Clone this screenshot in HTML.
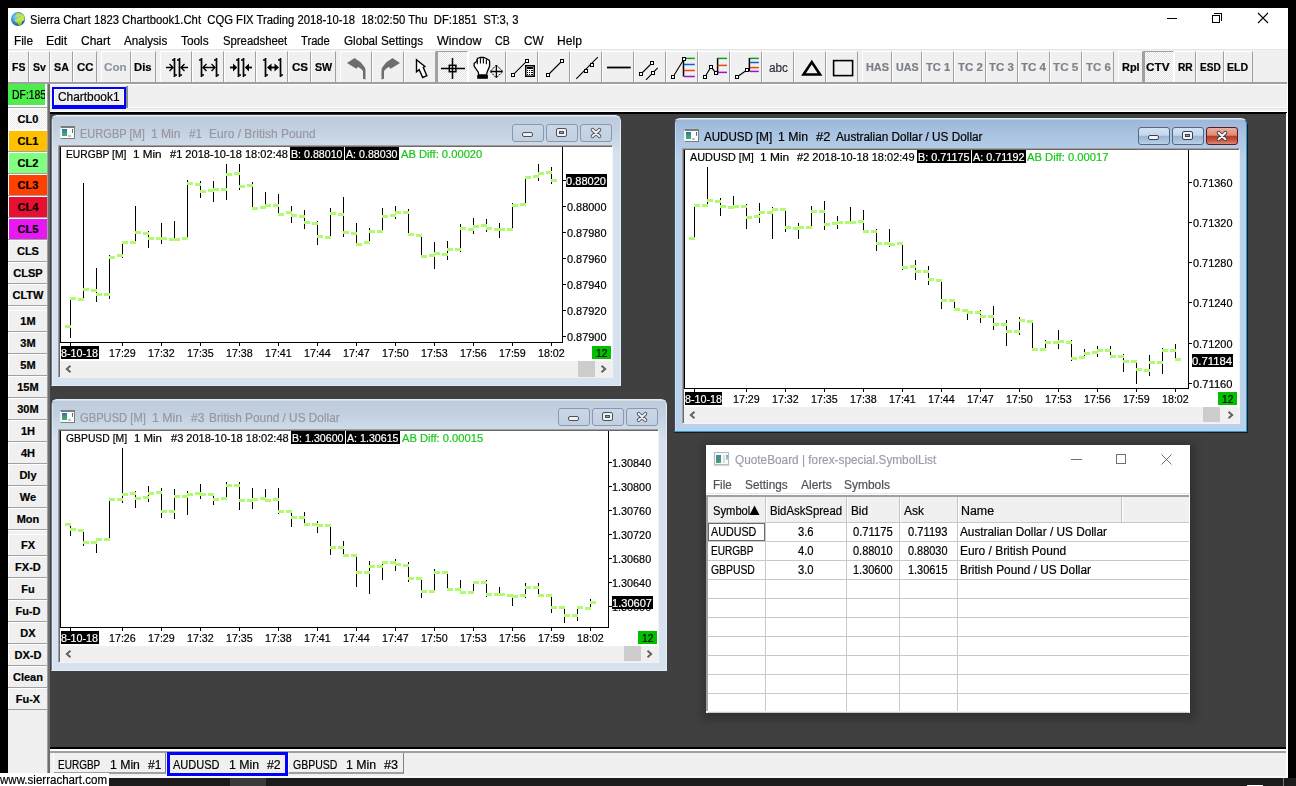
<!DOCTYPE html><html><head><meta charset="utf-8"><style>
*{margin:0;padding:0;box-sizing:border-box}
html,body{width:1296px;height:786px;overflow:hidden;background:#000;font-family:"Liberation Sans",sans-serif;}
div{position:absolute}
.t{position:absolute;white-space:pre;line-height:1;color:#000;-webkit-text-stroke:0.2px currentColor}
svg{position:absolute;overflow:visible}
</style></head><body><div style="left:8px;top:8px;width:1280px;height:770px;background:#fff"></div><svg style="left:10.8px;top:11.6px" width="14" height="14" viewBox="0 0 14 14"><defs><radialGradient id="gb" cx="0.35" cy="0.35" r="0.7"><stop offset="0" stop-color="#8ad4f4"/><stop offset="0.6" stop-color="#2f86d0"/><stop offset="1" stop-color="#1a56a8"/></radialGradient><linearGradient id="gg" x1="0" y1="0" x2="0" y2="1"><stop offset="0" stop-color="#b8e050"/><stop offset="0.5" stop-color="#c4ec48"/><stop offset="1" stop-color="#8cc020"/></linearGradient></defs><circle cx="7" cy="7" r="7" fill="url(#gb)"/><path d="M5.5 1.2 Q9.5 0.3 12.6 3.2 Q14.2 6 13.2 8.2 L11.4 9.2 Q10.8 12.2 8.6 13.8 Q7.2 13.4 6.8 11.2 Q4.2 10.4 3.4 8.6 Q3.8 6.8 6.2 6.9 Q7.4 6 6.2 5 Q4.6 4 5.5 1.2Z" fill="url(#gg)"/><path d="M7.5 4.2 Q9 4 10 5 Q9 5.6 7.8 5.2Z" fill="#5ab0e0" opacity="0.8"/></svg><div class="t" style="left:31.00px;top:13.84px;font-size:12px;color:#000;transform:scaleX(0.9391);transform-origin:0 0;margin-left:-0.56px;">Sierra Chart 1823 Chartbook1.Cht  CQG FIX Trading 2018-10-18  18:02:50 Thu  DF:1851  ST:3, 3</div><div style="left:1167px;top:18px;width:10px;height:1px;background:#000"></div><div style="left:1214px;top:13px;width:8px;height:8px;border:1px solid #000;border-left:none;border-bottom:none"></div><div style="left:1212px;top:15px;width:8px;height:8px;border:1px solid #000;background:#fff"></div><svg style="left:1258px;top:13px" width="10" height="10"><path d="M0 0L10 10M10 0L0 10" stroke="#000" stroke-width="1.1"/></svg><div class="t" style="left:15.00px;top:34.84px;font-size:12px;color:#000;transform:scaleX(0.9859);transform-origin:0 0;margin-left:-0.59px;">File</div><div class="t" style="left:46.90px;top:34.84px;font-size:12px;color:#000;transform:scaleX(1.0256);transform-origin:0 0;margin-left:-0.62px;">Edit</div><div class="t" style="left:81.60px;top:34.84px;font-size:12px;color:#000;transform:scaleX(1.0012);transform-origin:0 0;margin-left:-0.60px;">Chart</div><div class="t" style="left:124.40px;top:34.84px;font-size:12px;color:#000;transform:scaleX(0.9678);transform-origin:0 0;margin-left:-0.58px;">Analysis</div><div class="t" style="left:181.60px;top:34.84px;font-size:12px;color:#000;transform:scaleX(0.9876);transform-origin:0 0;margin-left:-0.59px;">Tools</div><div class="t" style="left:223.30px;top:34.84px;font-size:12px;color:#000;transform:scaleX(0.9437);transform-origin:0 0;margin-left:-0.57px;">Spreadsheet</div><div class="t" style="left:302.00px;top:34.84px;font-size:12px;color:#000;transform:scaleX(0.9321);transform-origin:0 0;margin-left:-0.56px;">Trade</div><div class="t" style="left:344.40px;top:34.84px;font-size:12px;color:#000;transform:scaleX(0.9713);transform-origin:0 0;margin-left:-0.58px;">Global Settings</div><div class="t" style="left:437.70px;top:34.84px;font-size:12px;color:#000;transform:scaleX(1.0408);transform-origin:0 0;margin-left:-0.62px;">Window</div><div class="t" style="left:495.60px;top:34.84px;font-size:12px;color:#000;transform:scaleX(0.8851);transform-origin:0 0;margin-left:-0.53px;">CB</div><div class="t" style="left:524.30px;top:34.84px;font-size:12px;color:#000;transform:scaleX(0.9782);transform-origin:0 0;margin-left:-0.59px;">CW</div><div class="t" style="left:557.40px;top:34.84px;font-size:12px;color:#000;transform:scaleX(1.0084);transform-origin:0 0;margin-left:-0.61px;">Help</div><div style="left:8px;top:49px;width:1280px;height:35px;background:#f0f0f0"></div><div style="left:8px;top:49px;width:1279px;height:1px;background:#e6e6e6"></div><div style="left:8px;top:82px;width:1279px;height:2px;background:#a0a0a0"></div><div style="left:8px;top:51px;width:21px;height:31px;background:#f0f0f0;border-left:1px solid #fff;border-top:1px solid #fff;border-right:1px solid #a0a0a0;"></div><div style="left:29px;top:51px;width:21px;height:31px;background:#f0f0f0;border-left:1px solid #fff;border-top:1px solid #fff;border-right:1px solid #a0a0a0;"></div><div style="left:50px;top:51px;width:23px;height:31px;background:#f0f0f0;border-left:1px solid #fff;border-top:1px solid #fff;border-right:1px solid #a0a0a0;"></div><div style="left:73px;top:51px;width:24px;height:31px;background:#f0f0f0;border-left:1px solid #fff;border-top:1px solid #fff;border-right:1px solid #a0a0a0;"></div><div style="left:101px;top:51px;width:30px;height:31px;background:#f0f0f0;border-left:1px solid #fff;border-top:1px solid #fff;border-right:1px solid #a0a0a0;"></div><div style="left:131px;top:51px;width:25px;height:31px;background:#f0f0f0;border-left:1px solid #fff;border-top:1px solid #fff;border-right:1px solid #a0a0a0;"></div><div style="left:160px;top:51px;width:32px;height:31px;background:#f0f0f0;border-left:1px solid #fff;border-top:1px solid #fff;border-right:1px solid #a0a0a0;"></div><div style="left:192px;top:51px;width:32px;height:31px;background:#f0f0f0;border-left:1px solid #fff;border-top:1px solid #fff;border-right:1px solid #a0a0a0;"></div><div style="left:224px;top:51px;width:32px;height:31px;background:#f0f0f0;border-left:1px solid #fff;border-top:1px solid #fff;border-right:1px solid #a0a0a0;"></div><div style="left:256px;top:51px;width:32px;height:31px;background:#f0f0f0;border-left:1px solid #fff;border-top:1px solid #fff;border-right:1px solid #a0a0a0;"></div><div style="left:288px;top:51px;width:23px;height:31px;background:#f0f0f0;border-left:1px solid #fff;border-top:1px solid #fff;border-right:1px solid #a0a0a0;"></div><div style="left:311px;top:51px;width:25px;height:31px;background:#f0f0f0;border-left:1px solid #fff;border-top:1px solid #fff;border-right:1px solid #a0a0a0;"></div><div style="left:340px;top:51px;width:32px;height:31px;background:#f0f0f0;border-left:1px solid #fff;border-top:1px solid #fff;border-right:1px solid #a0a0a0;"></div><div style="left:372px;top:51px;width:32px;height:31px;background:#f0f0f0;border-left:1px solid #fff;border-top:1px solid #fff;border-right:1px solid #a0a0a0;"></div><div style="left:404px;top:51px;width:32px;height:31px;background:#f0f0f0;border-left:1px solid #fff;border-top:1px solid #fff;border-right:1px solid #a0a0a0;"></div><div style="left:436px;top:51px;width:32px;height:31px;background-color:#f6f6f6;background-image:conic-gradient(#ffffff 25%,#e2e2e2 0 50%,#ffffff 0 75%,#e2e2e2 0);background-size:2px 2px;border-left:2px solid #a0a0a0;border-top:1px solid #a0a0a0;border-right:1px solid #fff;"></div><div style="left:468px;top:51px;width:38px;height:31px;background:#f0f0f0;border-left:1px solid #fff;border-top:1px solid #fff;border-right:1px solid #a0a0a0;"></div><div style="left:506px;top:51px;width:32px;height:31px;background:#f0f0f0;border-left:1px solid #fff;border-top:1px solid #fff;border-right:1px solid #a0a0a0;"></div><div style="left:538px;top:51px;width:32px;height:31px;background:#f0f0f0;border-left:1px solid #fff;border-top:1px solid #fff;border-right:1px solid #a0a0a0;"></div><div style="left:570px;top:51px;width:32px;height:31px;background:#f0f0f0;border-left:1px solid #fff;border-top:1px solid #fff;border-right:1px solid #a0a0a0;"></div><div style="left:602px;top:51px;width:32px;height:31px;background:#f0f0f0;border-left:1px solid #fff;border-top:1px solid #fff;border-right:1px solid #a0a0a0;"></div><div style="left:634px;top:51px;width:32px;height:31px;background:#f0f0f0;border-left:1px solid #fff;border-top:1px solid #fff;border-right:1px solid #a0a0a0;"></div><div style="left:666px;top:51px;width:32px;height:31px;background:#f0f0f0;border-left:1px solid #fff;border-top:1px solid #fff;border-right:1px solid #a0a0a0;"></div><div style="left:698px;top:51px;width:32px;height:31px;background:#f0f0f0;border-left:1px solid #fff;border-top:1px solid #fff;border-right:1px solid #a0a0a0;"></div><div style="left:730px;top:51px;width:32px;height:31px;background:#f0f0f0;border-left:1px solid #fff;border-top:1px solid #fff;border-right:1px solid #a0a0a0;"></div><div style="left:762px;top:51px;width:32px;height:31px;background:#f0f0f0;border-left:1px solid #fff;border-top:1px solid #fff;border-right:1px solid #a0a0a0;"></div><div style="left:794px;top:51px;width:32px;height:31px;background:#f0f0f0;border-left:1px solid #fff;border-top:1px solid #fff;border-right:1px solid #a0a0a0;"></div><div style="left:826px;top:51px;width:32px;height:31px;background:#f0f0f0;border-left:1px solid #fff;border-top:1px solid #fff;border-right:1px solid #a0a0a0;"></div><div style="left:862px;top:51px;width:30px;height:31px;background:#f0f0f0;border-left:1px solid #fff;border-top:1px solid #fff;border-right:1px solid #a0a0a0;"></div><div style="left:892px;top:51px;width:30px;height:31px;background:#f0f0f0;border-left:1px solid #fff;border-top:1px solid #fff;border-right:1px solid #a0a0a0;"></div><div style="left:922px;top:51px;width:32px;height:31px;background:#f0f0f0;border-left:1px solid #fff;border-top:1px solid #fff;border-right:1px solid #a0a0a0;"></div><div style="left:954px;top:51px;width:32px;height:31px;background:#f0f0f0;border-left:1px solid #fff;border-top:1px solid #fff;border-right:1px solid #a0a0a0;"></div><div style="left:986px;top:51px;width:32px;height:31px;background:#f0f0f0;border-left:1px solid #fff;border-top:1px solid #fff;border-right:1px solid #a0a0a0;"></div><div style="left:1018px;top:51px;width:32px;height:31px;background:#f0f0f0;border-left:1px solid #fff;border-top:1px solid #fff;border-right:1px solid #a0a0a0;"></div><div style="left:1050px;top:51px;width:32px;height:31px;background:#f0f0f0;border-left:1px solid #fff;border-top:1px solid #fff;border-right:1px solid #a0a0a0;"></div><div style="left:1082px;top:51px;width:32px;height:31px;background:#f0f0f0;border-left:1px solid #fff;border-top:1px solid #fff;border-right:1px solid #a0a0a0;"></div><div style="left:1118px;top:51px;width:25px;height:31px;background:#f0f0f0;border-left:1px solid #fff;border-top:1px solid #fff;border-right:1px solid #a0a0a0;"></div><div style="left:1143px;top:51px;width:31px;height:31px;background-color:#f6f6f6;background-image:conic-gradient(#ffffff 25%,#e2e2e2 0 50%,#ffffff 0 75%,#e2e2e2 0);background-size:2px 2px;border-left:2px solid #a0a0a0;border-top:1px solid #a0a0a0;border-right:1px solid #fff;"></div><div style="left:1174px;top:51px;width:22px;height:31px;background:#f0f0f0;border-left:1px solid #fff;border-top:1px solid #fff;border-right:1px solid #a0a0a0;"></div><div style="left:1196px;top:51px;width:28px;height:31px;background:#f0f0f0;border-left:1px solid #fff;border-top:1px solid #fff;border-right:1px solid #a0a0a0;"></div><div style="left:1224px;top:51px;width:29px;height:31px;background:#f0f0f0;border-left:1px solid #fff;border-top:1px solid #fff;border-right:1px solid #a0a0a0;"></div><div class="t" style="left:12.30px;top:61.69px;font-size:11px;color:#000;font-weight:bold;transform:scaleX(0.9490);transform-origin:0 0;margin-left:-0.52px;">FS</div><div class="t" style="left:34.00px;top:61.69px;font-size:11px;color:#000;font-weight:bold;transform:scaleX(0.9627);transform-origin:0 0;margin-left:-0.53px;">Sv</div><div class="t" style="left:54.80px;top:61.69px;font-size:11px;color:#000;font-weight:bold;transform:scaleX(0.9726);transform-origin:0 0;margin-left:-0.53px;">SA</div><div class="t" style="left:77.20px;top:61.69px;font-size:11px;color:#000;font-weight:bold;transform:scaleX(1.0337);transform-origin:0 0;margin-left:-0.57px;">CC</div><div class="t" style="left:105.00px;top:61.69px;font-size:11px;color:#8d95a2;font-weight:bold;transform:scaleX(1.0543);transform-origin:0 0;margin-left:-0.58px;">Con</div><div class="t" style="left:135.00px;top:61.69px;font-size:11px;color:#000;font-weight:bold;transform:scaleX(1.0231);transform-origin:0 0;margin-left:-0.56px;">Dis</div><div class="t" style="left:292.20px;top:61.69px;font-size:11px;color:#000;font-weight:bold;transform:scaleX(1.0496);transform-origin:0 0;margin-left:-0.58px;">CS</div><div class="t" style="left:315.90px;top:61.69px;font-size:11px;color:#000;font-weight:bold;transform:scaleX(0.9684);transform-origin:0 0;margin-left:-0.53px;">SW</div><div class="t" style="left:866.40px;top:61.69px;font-size:11px;color:#7a7f88;font-weight:bold;transform:scaleX(0.9894);transform-origin:0 0;margin-left:-0.54px;">HAS</div><div class="t" style="left:896.30px;top:61.69px;font-size:11px;color:#7a7f88;font-weight:bold;transform:scaleX(0.9714);transform-origin:0 0;margin-left:-0.53px;">UAS</div><div class="t" style="left:926.40px;top:61.69px;font-size:11px;color:#7a7f88;font-weight:bold;transform:scaleX(1.0111);transform-origin:0 0;margin-left:-0.56px;">TC 1</div><div class="t" style="left:958.20px;top:61.69px;font-size:11px;color:#7a7f88;font-weight:bold;transform:scaleX(1.0373);transform-origin:0 0;margin-left:-0.57px;">TC 2</div><div class="t" style="left:990.00px;top:61.69px;font-size:11px;color:#7a7f88;font-weight:bold;transform:scaleX(1.0417);transform-origin:0 0;margin-left:-0.57px;">TC 3</div><div class="t" style="left:1021.90px;top:61.69px;font-size:11px;color:#7a7f88;font-weight:bold;transform:scaleX(1.0505);transform-origin:0 0;margin-left:-0.58px;">TC 4</div><div class="t" style="left:1053.90px;top:61.69px;font-size:11px;color:#80858e;font-weight:bold;transform:scaleX(1.0636);transform-origin:0 0;margin-left:-0.58px;">TC 5</div><div class="t" style="left:1086.30px;top:61.69px;font-size:11px;color:#80858e;font-weight:bold;transform:scaleX(1.0373);transform-origin:0 0;margin-left:-0.57px;">TC 6</div><div class="t" style="left:1122.40px;top:61.69px;font-size:11px;color:#000;font-weight:bold;transform:scaleX(0.9923);transform-origin:0 0;margin-left:-0.55px;">Rpl</div><div class="t" style="left:1147.00px;top:61.69px;font-size:11px;color:#000;font-weight:bold;transform:scaleX(1.0661);transform-origin:0 0;margin-left:-0.59px;">CTV</div><div class="t" style="left:1178.20px;top:61.69px;font-size:11px;color:#000;font-weight:bold;transform:scaleX(0.9263);transform-origin:0 0;margin-left:-0.51px;">RR</div><div class="t" style="left:1200.00px;top:61.69px;font-size:11px;color:#000;font-weight:bold;transform:scaleX(0.9154);transform-origin:0 0;margin-left:-0.50px;">ESD</div><div class="t" style="left:1228.00px;top:61.69px;font-size:11px;color:#000;font-weight:bold;transform:scaleX(0.9566);transform-origin:0 0;margin-left:-0.53px;">ELD</div><svg style="left:160px;top:51px" width="32" height="31" viewBox="0 0 32 31"><path d="M14.5 7V26M19.5 7V26M12 9H14.5M14.5 24H17M19.5 9H17M19.5 24H22" stroke="#000" fill="none" stroke-width="1.7"/><path d="M6 16.5H12.5M9.5 13L13 16.5L9.5 20M21.5 16.5H28M24.5 13L21 16.5L24.5 20" stroke="#000" fill="none" stroke-width="1.3"/></svg><svg style="left:192px;top:51px" width="32" height="31" viewBox="0 0 32 31"><path d="M9.5 7V26M24.5 7V26M7 9H9.5M9.5 24H12M24.5 9H22M24.5 24H27" stroke="#000" fill="none" stroke-width="1.7"/><path d="M11 16.5H23M14.5 13L11 16.5L14.5 20M19.5 13L23 16.5L19.5 20" stroke="#000" fill="none" stroke-width="1.3"/></svg><svg style="left:224px;top:51px" width="32" height="31" viewBox="0 0 32 31"><path d="M14.5 7V26M19.5 7V26M12 9H14.5M14.5 24H17M19.5 9H17M19.5 24H22" stroke="#000" fill="none" stroke-width="1.7"/><path d="M6 16.5H10" stroke="#000" fill="none" stroke-width="1.8"/><path d="M9 12.5L13.2 16.5L9 20.5Z" fill="#000"/><path d="M24 16.5H28" stroke="#000" fill="none" stroke-width="1.8"/><path d="M25 12.5L20.8 16.5L25 20.5Z" fill="#000"/></svg><svg style="left:256px;top:51px" width="32" height="31" viewBox="0 0 32 31"><path d="M9.5 7V26M24.5 7V26M7 9H9.5M9.5 24H12M24.5 9H22M24.5 24H27" stroke="#000" fill="none" stroke-width="1.7"/><path d="M14 16.5H20" stroke="#000" fill="none" stroke-width="1.8"/><path d="M15.5 12.5L11 16.5L15.5 20.5Z" fill="#000"/><path d="M18.5 12.5L23 16.5L18.5 20.5Z" fill="#000"/></svg><svg style="left:340px;top:51px" width="32" height="31" viewBox="0 0 32 31"><path d="M7 12 L14.6 7 L16.5 8.6 Q21 11 22.5 13.5 Q25.5 16.5 25.5 19.5 V28.5 L23 27.8 V20.5 Q22.3 18 18 16 L16.3 17.8 Z" fill="#6d6d6d"/></svg><svg style="left:372px;top:51px" width="32" height="31" viewBox="0 0 32 31"><path d="M7 12 L14.6 7 L16.5 8.6 Q21 11 22.5 13.5 Q25.5 16.5 25.5 19.5 V28.5 L23 27.8 V20.5 Q22.3 18 18 16 L16.3 17.8 Z" fill="#6d6d6d" transform="translate(35 0) scale(-1 1)"/></svg><svg style="left:404px;top:51px" width="32" height="31" viewBox="0 0 32 31"><path d="M12.5 8.7 L20.8 15.5 L19.3 16.5 L22.8 24.7 L18.7 26.5 L15.2 18.6 L12.5 20.8 Z" fill="#fff" stroke="#000" stroke-width="1.4" stroke-linejoin="miter"/></svg><svg style="left:436px;top:51px" width="32" height="31" viewBox="0 0 32 31"><path d="M5 17.5H29M16.5 7V28" stroke="#000" fill="none" stroke-width="1.5"/><rect x="13.3" y="14.3" width="6.6" height="6.4" stroke="#000" fill="none" stroke-width="1.5"/></svg><svg style="left:468px;top:51px" width="38" height="31" viewBox="0 0 38 31"><path d="M10.6 24 L10.4 21.5 L6.1 15.1 V12.6 L9.1 10 V8.2 Q9.5 6.8 10.8 6.8 L12.6 6.3 L15.4 6.5 L18.3 7.5 L21.1 9.2 Q21.7 9.8 21.6 10.5 V15.1 L19 21.5 L18.6 24 Z" fill="#fff" stroke="#000" stroke-width="1.3"/><rect x="9.2" y="24" width="10.7" height="3.8" fill="#000"/><path d="M9.3 8.3V13.3M12.4 7.3V12.4M15.4 7.3V12.4M18.4 8.3V13.3" stroke="#000" stroke-width="1.1"/><path d="M28.4 14L34.8 20.5L28.4 26.9L22.2 20.5Z" fill="none" stroke="#000" stroke-width="1" stroke-dasharray="2.2 0.9"/><path d="M22.5 20.5H34.5M28.4 14.3V26.6" stroke="#000" stroke-width="1.3"/></svg><svg style="left:506px;top:51px" width="32" height="31" viewBox="0 0 32 31"><path d="M7 23.9L21 9.9" stroke="#000" fill="none" stroke-width="1.1"/><rect x="5" y="22" width="4" height="4" fill="#000" shape-rendering="crispEdges"/><rect x="6" y="23" width="2" height="2" fill="#fff" shape-rendering="crispEdges"/><rect x="19" y="8" width="4" height="4" fill="#000" shape-rendering="crispEdges"/><rect x="20" y="9" width="2" height="2" fill="#fff" shape-rendering="crispEdges"/><rect x="19.75" y="14.75" width="8.5" height="10.5" stroke="#000" stroke-width="1.5" fill="#fff"/><g shape-rendering="crispEdges" fill="#000"><rect x="21" y="16" width="6" height="2"/><rect x="21" y="19" width="1" height="1"/><rect x="23" y="19" width="1" height="1"/><rect x="25" y="19" width="2" height="1"/><rect x="21" y="21" width="1" height="1"/><rect x="23" y="21" width="1" height="1"/><rect x="25" y="21" width="2" height="1"/><rect x="21" y="23" width="1" height="1"/><rect x="23" y="23" width="1" height="1"/><rect x="25" y="23" width="2" height="1"/></g></svg><svg style="left:538px;top:51px" width="32" height="31" viewBox="0 0 32 31"><path d="M10 24L24 10" stroke="#000" fill="none" stroke-width="1.1"/><rect x="8" y="22" width="4" height="4" fill="#000" shape-rendering="crispEdges"/><rect x="9" y="23" width="2" height="2" fill="#fff" shape-rendering="crispEdges"/><rect x="22" y="8" width="4" height="4" fill="#000" shape-rendering="crispEdges"/><rect x="23" y="9" width="2" height="2" fill="#fff" shape-rendering="crispEdges"/></svg><svg style="left:570px;top:51px" width="32" height="31" viewBox="0 0 32 31"><path d="M6.2 27.8L27.8 6.1" stroke="#000" fill="none" stroke-width="1.1"/><rect x="14" y="18" width="4" height="4" fill="#000" shape-rendering="crispEdges"/><rect x="15" y="19" width="2" height="2" fill="#fff" shape-rendering="crispEdges"/><rect x="20" y="12" width="4" height="4" fill="#000" shape-rendering="crispEdges"/><rect x="21" y="13" width="2" height="2" fill="#fff" shape-rendering="crispEdges"/></svg><svg style="left:602px;top:51px" width="32" height="31" viewBox="0 0 32 31"><path d="M5 16.5H28.7" stroke="#000" fill="none" stroke-width="1.8"/></svg><svg style="left:634px;top:51px" width="32" height="31" viewBox="0 0 32 31"><path d="M7 23L18 12M12 28.8L23.7 16.8" stroke="#000" fill="none" stroke-width="1.1"/><rect x="5" y="21" width="4" height="4" fill="#000" shape-rendering="crispEdges"/><rect x="6" y="22" width="2" height="2" fill="#fff" shape-rendering="crispEdges"/><rect x="16" y="10" width="4" height="4" fill="#000" shape-rendering="crispEdges"/><rect x="17" y="11" width="2" height="2" fill="#fff" shape-rendering="crispEdges"/><rect x="17" y="20" width="4" height="4" fill="#000" shape-rendering="crispEdges"/><rect x="18" y="21" width="2" height="2" fill="#fff" shape-rendering="crispEdges"/></svg><svg style="left:666px;top:51px" width="32" height="31" viewBox="0 0 32 31"><path d="M7 26L18 8" stroke="#000" stroke-width="1.1" fill="none"/><path d="M17.5 8V25.5" stroke="#000" fill="none" stroke-width="1.5"/><path d="M19.9 7.4H28.8" stroke="#10a010" stroke-width="1.5"/><path d="M17.9 13.5H28.8" stroke="#1060d0" stroke-width="1.5"/><path d="M17.9 19.5H28.8" stroke="#e04a10" stroke-width="1.5"/><path d="M17.9 25.5H28.8" stroke="#a010d0" stroke-width="1.5"/><rect x="5" y="24" width="4" height="4" fill="#000" shape-rendering="crispEdges"/><rect x="6" y="25" width="2" height="2" fill="#fff" shape-rendering="crispEdges"/><rect x="16" y="6" width="4" height="4" fill="#000" shape-rendering="crispEdges"/><rect x="17" y="7" width="2" height="2" fill="#fff" shape-rendering="crispEdges"/></svg><svg style="left:698px;top:51px" width="32" height="31" viewBox="0 0 32 31"><path d="M7 26L13 15.8L18 22.2" stroke="#000" stroke-width="1.1" fill="none"/><path d="M19.6 6.9V23.4" stroke="#000" fill="none" stroke-width="1.5"/><path d="M19.6 7.4H29" stroke="#10a010" stroke-width="1.5"/><path d="M19.6 14.4H29" stroke="#e04a10" stroke-width="1.5"/><path d="M19.6 21.4H29" stroke="#a010d0" stroke-width="1.5"/><rect x="5" y="24" width="4" height="4" fill="#000" shape-rendering="crispEdges"/><rect x="6" y="25" width="2" height="2" fill="#fff" shape-rendering="crispEdges"/><rect x="11" y="14" width="4" height="4" fill="#000" shape-rendering="crispEdges"/><rect x="12" y="15" width="2" height="2" fill="#fff" shape-rendering="crispEdges"/><rect x="16" y="20" width="4" height="4" fill="#000" shape-rendering="crispEdges"/><rect x="17" y="21" width="2" height="2" fill="#fff" shape-rendering="crispEdges"/></svg><svg style="left:730px;top:51px" width="32" height="31" viewBox="0 0 32 31"><path d="M7 26L17 19" stroke="#000" stroke-width="1.1" fill="none"/><path d="M19.4 6.9V20.4" stroke="#000" fill="none" stroke-width="1.5"/><path d="M19.9 7.4H28.8" stroke="#10a010" stroke-width="1.5"/><path d="M19.9 11.5H28.8" stroke="#1060d0" stroke-width="1.5"/><path d="M19.9 16.6H28.8" stroke="#e04a10" stroke-width="1.5"/><path d="M19.9 20.4H28.8" stroke="#a010d0" stroke-width="1.5"/><rect x="5" y="24" width="4" height="4" fill="#000" shape-rendering="crispEdges"/><rect x="6" y="25" width="2" height="2" fill="#fff" shape-rendering="crispEdges"/><rect x="15" y="17" width="4" height="4" fill="#000" shape-rendering="crispEdges"/><rect x="16" y="18" width="2" height="2" fill="#fff" shape-rendering="crispEdges"/></svg><div class="t" style="left:770.00px;top:61.72px;font-size:12.5px;color:#2e2e3e;transform:scaleX(0.9407);transform-origin:0 0;margin-left:-0.59px;">abc</div><svg style="left:794px;top:51px" width="32" height="31" viewBox="0 0 32 31"><path d="M9.5 23.5L17.8 11L26 23.5Z" stroke="#000" stroke-width="2.6" fill="none" stroke-linejoin="miter"/></svg><svg style="left:826px;top:51px" width="32" height="31" viewBox="0 0 32 31"><rect x="7.6" y="9.6" width="19" height="15" stroke="#000" stroke-width="1.6" fill="none"/></svg><div style="left:50px;top:84px;width:1237px;height:28px;background:#f0f0f0"></div><div style="left:50px;top:84px;width:1237px;height:1px;background:#fff"></div><div style="left:49px;top:84px;width:1px;height:28px;background:#fff"></div><div style="left:50px;top:107px;width:1237px;height:1px;background:#fff"></div><div style="left:50px;top:108px;width:1237px;height:1px;background:#e3e3e3"></div><div style="left:50px;top:111px;width:1237px;height:1px;background:#fff"></div><div style="left:52px;top:87px;width:74px;height:22px;background:#f0f0f0;border:2px solid #0000ff;border-bottom-width:4px"></div><div style="left:54px;top:89px;width:70px;height:16px;border:1px solid #fff;border-bottom:none;border-right-color:#fff"></div><div style="left:126px;top:86px;width:2px;height:22px;background:#8a8a8a"></div><div class="t" style="left:58.50px;top:90.84px;font-size:12px;color:#000;transform:scaleX(0.9924);transform-origin:0 0;margin-left:-0.60px;">Chartbook1</div><div style="left:8px;top:84px;width:39px;height:694px;background:#f0f0f0"></div><div style="left:47px;top:84px;width:1px;height:692px;background:#a0a0a0"></div><div style="left:48px;top:84px;width:2px;height:692px;background:#6e6e6e"></div><div style="left:8px;top:82px;width:39px;height:2px;background:#a0a0a0"></div><div style="left:8px;top:84px;width:39px;height:23px;background:#fff"></div><div style="left:8px;top:84px;width:37px;height:21px;background:#4ced4c;overflow:hidden"><div class="t" style="left:5.00px;top:4.84px;font-size:12px;color:#000;transform:scaleX(0.8677);transform-origin:0 0;margin-left:-0.52px;">DF:1851</div></div><div style="left:8px;top:107px;width:39px;height:1px;background:#a0a0a0"></div><div style="left:8px;top:108px;width:39px;height:21px;background-color:#f6f6f6;background-image:conic-gradient(#ffffff 25%,#eaeaea 0 50%,#ffffff 0 75%,#eaeaea 0);background-size:2px 2px;border-left:1px solid #fff;border-top:1px solid #fff;"></div><div style="left:8px;top:129px;width:39px;height:1px;background:#fff"></div><div class="t" style="left:18.10px;top:113.69px;font-size:11px;color:#000;font-weight:bold;margin-left:-0.55px;">CL0</div><div style="left:8px;top:130px;width:39px;height:21px;background:#ffc000;border-left:1px solid #fff;border-top:1px solid #fff;"></div><div style="left:8px;top:151px;width:39px;height:1px;background:#a0a0a0"></div><div class="t" style="left:18.10px;top:135.69px;font-size:11px;color:#000;font-weight:bold;margin-left:-0.55px;">CL1</div><div style="left:8px;top:152px;width:39px;height:21px;background:#80ff80;border-left:1px solid #fff;border-top:1px solid #fff;"></div><div style="left:8px;top:173px;width:39px;height:1px;background:#a0a0a0"></div><div class="t" style="left:18.10px;top:157.69px;font-size:11px;color:#000;font-weight:bold;margin-left:-0.55px;">CL2</div><div style="left:8px;top:174px;width:39px;height:21px;background:#ff4000;border-left:1px solid #fff;border-top:1px solid #fff;"></div><div style="left:8px;top:195px;width:39px;height:1px;background:#a0a0a0"></div><div class="t" style="left:18.10px;top:179.69px;font-size:11px;color:#000;font-weight:bold;margin-left:-0.55px;">CL3</div><div style="left:8px;top:196px;width:39px;height:21px;background:#e81030;border-left:1px solid #fff;border-top:1px solid #fff;"></div><div style="left:8px;top:217px;width:39px;height:1px;background:#a0a0a0"></div><div class="t" style="left:18.10px;top:201.69px;font-size:11px;color:#000;font-weight:bold;margin-left:-0.55px;">CL4</div><div style="left:8px;top:218px;width:39px;height:21px;background:#e818f0;border-left:1px solid #fff;border-top:1px solid #fff;"></div><div style="left:8px;top:239px;width:39px;height:1px;background:#a0a0a0"></div><div class="t" style="left:18.10px;top:223.69px;font-size:11px;color:#000;font-weight:bold;margin-left:-0.55px;">CL5</div><div style="left:8px;top:240px;width:39px;height:21px;background:#f0f0f0;border-left:1px solid #fff;border-top:1px solid #fff;"></div><div style="left:8px;top:261px;width:39px;height:1px;background:#a0a0a0"></div><div class="t" style="left:17.49px;top:245.69px;font-size:11px;color:#000;font-weight:bold;margin-left:-0.55px;">CLS</div><div style="left:8px;top:262px;width:39px;height:21px;background:#f0f0f0;border-left:1px solid #fff;border-top:1px solid #fff;"></div><div style="left:8px;top:283px;width:39px;height:1px;background:#a0a0a0"></div><div class="t" style="left:13.83px;top:267.69px;font-size:11px;color:#000;font-weight:bold;margin-left:-0.55px;">CLSP</div><div style="left:8px;top:284px;width:39px;height:21px;background:#f0f0f0;border-left:1px solid #fff;border-top:1px solid #fff;"></div><div style="left:8px;top:305px;width:39px;height:1px;background:#a0a0a0"></div><div class="t" style="left:13.02px;top:289.69px;font-size:11px;color:#000;font-weight:bold;margin-left:-0.55px;">CLTW</div><div style="left:8px;top:306px;width:39px;height:1px;background:#fff"></div><div style="left:8px;top:310px;width:39px;height:21px;background:#f0f0f0;border-left:1px solid #fff;border-top:1px solid #fff;"></div><div style="left:8px;top:331px;width:39px;height:1px;background:#a0a0a0"></div><div class="t" style="left:20.85px;top:315.69px;font-size:11px;color:#000;font-weight:bold;margin-left:-0.55px;">1M</div><div style="left:8px;top:332px;width:39px;height:21px;background:#f0f0f0;border-left:1px solid #fff;border-top:1px solid #fff;"></div><div style="left:8px;top:353px;width:39px;height:1px;background:#a0a0a0"></div><div class="t" style="left:20.85px;top:337.69px;font-size:11px;color:#000;font-weight:bold;margin-left:-0.55px;">3M</div><div style="left:8px;top:354px;width:39px;height:21px;background:#f0f0f0;border-left:1px solid #fff;border-top:1px solid #fff;"></div><div style="left:8px;top:375px;width:39px;height:1px;background:#a0a0a0"></div><div class="t" style="left:20.85px;top:359.69px;font-size:11px;color:#000;font-weight:bold;margin-left:-0.55px;">5M</div><div style="left:8px;top:376px;width:39px;height:21px;background:#f0f0f0;border-left:1px solid #fff;border-top:1px solid #fff;"></div><div style="left:8px;top:397px;width:39px;height:1px;background:#a0a0a0"></div><div class="t" style="left:17.80px;top:381.69px;font-size:11px;color:#000;font-weight:bold;margin-left:-0.55px;">15M</div><div style="left:8px;top:398px;width:39px;height:21px;background:#f0f0f0;border-left:1px solid #fff;border-top:1px solid #fff;"></div><div style="left:8px;top:419px;width:39px;height:1px;background:#a0a0a0"></div><div class="t" style="left:17.80px;top:403.69px;font-size:11px;color:#000;font-weight:bold;margin-left:-0.55px;">30M</div><div style="left:8px;top:420px;width:39px;height:21px;background:#f0f0f0;border-left:1px solid #fff;border-top:1px solid #fff;"></div><div style="left:8px;top:441px;width:39px;height:1px;background:#a0a0a0"></div><div class="t" style="left:21.46px;top:425.69px;font-size:11px;color:#000;font-weight:bold;margin-left:-0.55px;">1H</div><div style="left:8px;top:442px;width:39px;height:21px;background:#f0f0f0;border-left:1px solid #fff;border-top:1px solid #fff;"></div><div style="left:8px;top:463px;width:39px;height:1px;background:#a0a0a0"></div><div class="t" style="left:21.46px;top:447.69px;font-size:11px;color:#000;font-weight:bold;margin-left:-0.55px;">4H</div><div style="left:8px;top:464px;width:39px;height:21px;background:#f0f0f0;border-left:1px solid #fff;border-top:1px solid #fff;"></div><div style="left:8px;top:485px;width:39px;height:1px;background:#a0a0a0"></div><div class="t" style="left:19.94px;top:469.69px;font-size:11px;color:#000;font-weight:bold;margin-left:-0.55px;">Dly</div><div style="left:8px;top:486px;width:39px;height:21px;background:#f0f0f0;border-left:1px solid #fff;border-top:1px solid #fff;"></div><div style="left:8px;top:507px;width:39px;height:1px;background:#a0a0a0"></div><div class="t" style="left:20.34px;top:491.69px;font-size:11px;color:#000;font-weight:bold;margin-left:-0.55px;">We</div><div style="left:8px;top:508px;width:39px;height:21px;background:#f0f0f0;border-left:1px solid #fff;border-top:1px solid #fff;"></div><div style="left:8px;top:529px;width:39px;height:1px;background:#a0a0a0"></div><div class="t" style="left:17.19px;top:513.69px;font-size:11px;color:#000;font-weight:bold;margin-left:-0.55px;">Mon</div><div style="left:8px;top:530px;width:39px;height:1px;background:#fff"></div><div style="left:8px;top:534px;width:39px;height:21px;background:#f0f0f0;border-left:1px solid #fff;border-top:1px solid #fff;"></div><div style="left:8px;top:555px;width:39px;height:1px;background:#a0a0a0"></div><div class="t" style="left:21.47px;top:539.69px;font-size:11px;color:#000;font-weight:bold;margin-left:-0.55px;">FX</div><div style="left:8px;top:556px;width:39px;height:21px;background:#f0f0f0;border-left:1px solid #fff;border-top:1px solid #fff;"></div><div style="left:8px;top:577px;width:39px;height:1px;background:#a0a0a0"></div><div class="t" style="left:15.66px;top:561.69px;font-size:11px;color:#000;font-weight:bold;margin-left:-0.55px;">FX-D</div><div style="left:8px;top:578px;width:39px;height:21px;background:#f0f0f0;border-left:1px solid #fff;border-top:1px solid #fff;"></div><div style="left:8px;top:599px;width:39px;height:1px;background:#a0a0a0"></div><div class="t" style="left:21.78px;top:583.69px;font-size:11px;color:#000;font-weight:bold;margin-left:-0.55px;">Fu</div><div style="left:8px;top:600px;width:39px;height:21px;background:#f0f0f0;border-left:1px solid #fff;border-top:1px solid #fff;"></div><div style="left:8px;top:621px;width:39px;height:1px;background:#a0a0a0"></div><div class="t" style="left:15.97px;top:605.69px;font-size:11px;color:#000;font-weight:bold;margin-left:-0.55px;">Fu-D</div><div style="left:8px;top:622px;width:39px;height:21px;background:#f0f0f0;border-left:1px solid #fff;border-top:1px solid #fff;"></div><div style="left:8px;top:643px;width:39px;height:1px;background:#a0a0a0"></div><div class="t" style="left:20.85px;top:627.69px;font-size:11px;color:#000;font-weight:bold;margin-left:-0.55px;">DX</div><div style="left:8px;top:644px;width:39px;height:21px;background:#f0f0f0;border-left:1px solid #fff;border-top:1px solid #fff;"></div><div style="left:8px;top:665px;width:39px;height:1px;background:#a0a0a0"></div><div class="t" style="left:15.05px;top:649.69px;font-size:11px;color:#000;font-weight:bold;margin-left:-0.55px;">DX-D</div><div style="left:8px;top:666px;width:39px;height:21px;background:#f0f0f0;border-left:1px solid #fff;border-top:1px solid #fff;"></div><div style="left:8px;top:687px;width:39px;height:1px;background:#a0a0a0"></div><div class="t" style="left:13.52px;top:671.69px;font-size:11px;color:#000;font-weight:bold;margin-left:-0.55px;">Clean</div><div style="left:8px;top:688px;width:39px;height:21px;background:#f0f0f0;border-left:1px solid #fff;border-top:1px solid #fff;"></div><div style="left:8px;top:709px;width:39px;height:1px;background:#a0a0a0"></div><div class="t" style="left:16.28px;top:693.69px;font-size:11px;color:#000;font-weight:bold;margin-left:-0.55px;">Fu-X</div><div style="left:50px;top:112px;width:1237px;height:2px;background:#000"></div><div style="left:50px;top:114px;width:1236px;height:633px;background:#404040"></div><div style="left:51px;top:115px;width:570px;height:271px;background:linear-gradient(#bdcbdc 0px,#c3d0e0 14px,#cedbe8 30px,#d6e2ef 40px,#d6e2ef 100%);border:1px solid #e2eaf3;border-left-color:#6a7684;border-radius:6px 6px 0 0;"></div><div style="left:52px;top:116px;width:568px;height:1px;background:rgba(255,255,255,0.35);border-radius:5px 5px 0 0"></div><div style="left:52px;top:117px;width:1px;height:268px;background:rgba(255,255,255,0.35)"></div><div style="left:60px;top:126px;width:15px;height:13px;background:#fbfbfb;border-top:2px solid #7c7c7c;border-right:1px solid #7c7c7c;border-bottom:1px solid #7c7c7c;border-left:1px solid #e8eef4;border-radius:1px"><div style="left:0.7px;top:1px;width:5.5px;height:7px;background:linear-gradient(#3a6ab8,#3a9a80 50%,#48b060)"></div><div style="left:11px;top:1px;width:1.2px;height:4px;background:linear-gradient(#2a58b0,#40a850)"></div><div style="left:7px;top:7px;width:3px;height:2px;background:#c4c4c4"></div></div><div class="t" style="left:80.50px;top:127.84px;font-size:12px;color:#9896a2;transform:scaleX(0.9196);transform-origin:0 0;margin-left:-0.55px;">EURGBP [M]</div><div class="t" style="left:152.00px;top:127.84px;font-size:12px;color:#9896a2;transform:scaleX(1.0048);transform-origin:0 0;margin-left:-0.60px;">1 Min</div><div class="t" style="left:189.90px;top:127.84px;font-size:12px;color:#9896a2;transform:scaleX(0.9863);transform-origin:0 0;margin-left:-0.59px;">#1</div><div class="t" style="left:209.10px;top:127.84px;font-size:12px;color:#9896a2;transform:scaleX(0.9986);transform-origin:0 0;margin-left:-0.60px;">Euro / British Pound</div><div style="left:512px;top:124px;width:32px;height:18px;background:linear-gradient(#cad7e6 0%,#c6d3e2 50%,#c2d0e0 100%);border:1px solid #8898b2;border-radius:3px;"></div><div style="left:522px;top:132px;width:11px;height:5px;background:#f0f0f0;border:1px solid #4a5060;border-radius:2px"></div><div style="left:546px;top:124px;width:32px;height:18px;background:linear-gradient(#cad7e6 0%,#c6d3e2 50%,#c2d0e0 100%);border:1px solid #8898b2;border-radius:3px;"></div><div style="left:556px;top:128px;width:11px;height:9px;background:#f0f0f0;border:1px solid #4a5060;border-radius:2px"><div style="left:2px;top:2px;width:5px;height:3px;background:#8aa0c0;border:1px solid #4a5060"></div></div><div style="left:580px;top:124px;width:32px;height:18px;background:linear-gradient(#cad7e6 0%,#c6d3e2 50%,#c2d0e0 100%);border:1px solid #8898b2;border-radius:3px;"></div><svg style="left:590.0px;top:128px" width="12" height="10" viewBox="0 0 12 10"><path d="M2.6 1.8L9.4 8.2M9.4 1.8L2.6 8.2" stroke="#4a5060" stroke-width="3.8" stroke-linecap="round"/><path d="M2.6 1.8L9.4 8.2M9.4 1.8L2.6 8.2" stroke="#f0f0f0" stroke-width="2.0" stroke-linecap="round"/></svg><div style="left:58px;top:145px;width:555px;height:233px;background:#fff;border-left:1px solid #a0a0a0;border-top:1px solid #a0a0a0;border-right:1px solid #f4f4f4;border-bottom:1px solid #f4f4f4"></div><div style="left:59px;top:146px;width:553px;height:1px;background:#696969"></div><div style="left:59px;top:146px;width:1px;height:231px;background:#696969"></div><div style="left:60px;top:147px;width:1px;height:196px;background:#000"></div><div style="left:60px;top:342px;width:503px;height:1px;background:#000"></div><div style="left:562px;top:147px;width:1px;height:196px;background:#000"></div><svg style="left:61px;top:147px" width="501" height="195" shape-rendering="crispEdges"><rect x="9" y="151" width="1" height="40" fill="#000"/><rect x="22" y="36" width="1" height="116" fill="#000"/><rect x="35" y="121" width="1" height="34" fill="#000"/><rect x="48" y="108" width="1" height="44" fill="#000"/><rect x="61" y="95" width="1" height="16" fill="#000"/><rect x="74" y="59" width="1" height="37" fill="#000"/><rect x="87" y="84" width="1" height="17" fill="#000"/><rect x="100" y="76" width="1" height="21" fill="#000"/><rect x="113" y="74" width="1" height="19" fill="#000"/><rect x="126" y="33" width="1" height="59" fill="#000"/><rect x="139" y="34" width="1" height="17" fill="#000"/><rect x="152" y="34" width="1" height="21" fill="#000"/><rect x="165" y="17" width="1" height="36" fill="#000"/><rect x="178" y="17" width="1" height="26" fill="#000"/><rect x="191" y="35" width="1" height="26" fill="#000"/><rect x="204" y="45" width="1" height="16" fill="#000"/><rect x="217" y="47" width="1" height="20" fill="#000"/><rect x="230" y="59" width="1" height="17" fill="#000"/><rect x="243" y="63" width="1" height="19" fill="#000"/><rect x="256" y="74" width="1" height="24" fill="#000"/><rect x="269" y="61" width="1" height="30" fill="#000"/><rect x="282" y="50" width="1" height="40" fill="#000"/><rect x="295" y="76" width="1" height="22" fill="#000"/><rect x="308" y="81" width="1" height="15" fill="#000"/><rect x="321" y="61" width="1" height="24" fill="#000"/><rect x="334" y="59" width="1" height="13" fill="#000"/><rect x="347" y="62" width="1" height="26" fill="#000"/><rect x="360" y="88" width="1" height="22" fill="#000"/><rect x="373" y="95" width="1" height="27" fill="#000"/><rect x="386" y="94" width="1" height="19" fill="#000"/><rect x="399" y="77" width="1" height="28" fill="#000"/><rect x="412" y="71" width="1" height="16" fill="#000"/><rect x="425" y="72" width="1" height="13" fill="#000"/><rect x="438" y="76" width="1" height="15" fill="#000"/><rect x="451" y="56" width="1" height="27" fill="#000"/><rect x="464" y="30" width="1" height="27" fill="#000"/><rect x="477" y="17" width="1" height="17" fill="#000"/><rect x="490" y="20" width="1" height="17" fill="#000"/><rect x="4" y="178" width="6" height="3" fill="#b2fa72"/><rect x="9" y="150" width="6" height="3" fill="#b2fa72"/><rect x="17" y="151" width="6" height="3" fill="#b2fa72"/><rect x="22" y="141" width="6" height="3" fill="#b2fa72"/><rect x="30" y="142" width="6" height="3" fill="#b2fa72"/><rect x="35" y="146" width="6" height="3" fill="#b2fa72"/><rect x="43" y="146" width="6" height="3" fill="#b2fa72"/><rect x="48" y="109" width="6" height="3" fill="#b2fa72"/><rect x="56" y="107" width="6" height="3" fill="#b2fa72"/><rect x="61" y="94" width="6" height="3" fill="#b2fa72"/><rect x="69" y="94" width="6" height="3" fill="#b2fa72"/><rect x="74" y="84" width="6" height="3" fill="#b2fa72"/><rect x="82" y="85" width="6" height="3" fill="#b2fa72"/><rect x="87" y="90" width="6" height="3" fill="#b2fa72"/><rect x="95" y="90" width="6" height="3" fill="#b2fa72"/><rect x="100" y="90" width="6" height="3" fill="#b2fa72"/><rect x="108" y="91" width="6" height="3" fill="#b2fa72"/><rect x="113" y="91" width="6" height="3" fill="#b2fa72"/><rect x="121" y="90" width="6" height="3" fill="#b2fa72"/><rect x="126" y="35" width="6" height="3" fill="#b2fa72"/><rect x="134" y="36" width="6" height="3" fill="#b2fa72"/><rect x="139" y="43" width="6" height="3" fill="#b2fa72"/><rect x="147" y="42" width="6" height="3" fill="#b2fa72"/><rect x="152" y="41" width="6" height="3" fill="#b2fa72"/><rect x="160" y="41" width="6" height="3" fill="#b2fa72"/><rect x="165" y="26" width="6" height="3" fill="#b2fa72"/><rect x="173" y="25" width="6" height="3" fill="#b2fa72"/><rect x="178" y="38" width="6" height="3" fill="#b2fa72"/><rect x="186" y="37" width="6" height="3" fill="#b2fa72"/><rect x="191" y="60" width="6" height="3" fill="#b2fa72"/><rect x="199" y="59" width="6" height="3" fill="#b2fa72"/><rect x="204" y="57" width="6" height="3" fill="#b2fa72"/><rect x="212" y="57" width="6" height="3" fill="#b2fa72"/><rect x="217" y="66" width="6" height="3" fill="#b2fa72"/><rect x="225" y="64" width="6" height="3" fill="#b2fa72"/><rect x="230" y="67" width="6" height="3" fill="#b2fa72"/><rect x="238" y="68" width="6" height="3" fill="#b2fa72"/><rect x="243" y="74" width="6" height="3" fill="#b2fa72"/><rect x="251" y="75" width="6" height="3" fill="#b2fa72"/><rect x="256" y="88" width="6" height="3" fill="#b2fa72"/><rect x="264" y="89" width="6" height="3" fill="#b2fa72"/><rect x="269" y="65" width="6" height="3" fill="#b2fa72"/><rect x="277" y="66" width="6" height="3" fill="#b2fa72"/><rect x="282" y="84" width="6" height="3" fill="#b2fa72"/><rect x="290" y="85" width="6" height="3" fill="#b2fa72"/><rect x="295" y="96" width="6" height="3" fill="#b2fa72"/><rect x="303" y="94" width="6" height="3" fill="#b2fa72"/><rect x="308" y="83" width="6" height="3" fill="#b2fa72"/><rect x="316" y="83" width="6" height="3" fill="#b2fa72"/><rect x="321" y="68" width="6" height="3" fill="#b2fa72"/><rect x="329" y="67" width="6" height="3" fill="#b2fa72"/><rect x="334" y="64" width="6" height="3" fill="#b2fa72"/><rect x="342" y="64" width="6" height="3" fill="#b2fa72"/><rect x="347" y="86" width="6" height="3" fill="#b2fa72"/><rect x="355" y="87" width="6" height="3" fill="#b2fa72"/><rect x="360" y="108" width="6" height="3" fill="#b2fa72"/><rect x="368" y="107" width="6" height="3" fill="#b2fa72"/><rect x="373" y="105" width="6" height="3" fill="#b2fa72"/><rect x="381" y="106" width="6" height="3" fill="#b2fa72"/><rect x="386" y="101" width="6" height="3" fill="#b2fa72"/><rect x="394" y="101" width="6" height="3" fill="#b2fa72"/><rect x="399" y="80" width="6" height="3" fill="#b2fa72"/><rect x="407" y="81" width="6" height="3" fill="#b2fa72"/><rect x="412" y="78" width="6" height="3" fill="#b2fa72"/><rect x="420" y="77" width="6" height="3" fill="#b2fa72"/><rect x="425" y="80" width="6" height="3" fill="#b2fa72"/><rect x="433" y="81" width="6" height="3" fill="#b2fa72"/><rect x="438" y="81" width="6" height="3" fill="#b2fa72"/><rect x="446" y="81" width="6" height="3" fill="#b2fa72"/><rect x="451" y="57" width="6" height="3" fill="#b2fa72"/><rect x="459" y="56" width="6" height="3" fill="#b2fa72"/><rect x="464" y="29" width="6" height="3" fill="#b2fa72"/><rect x="472" y="28" width="6" height="3" fill="#b2fa72"/><rect x="477" y="25" width="6" height="3" fill="#b2fa72"/><rect x="485" y="24" width="6" height="3" fill="#b2fa72"/><rect x="490" y="32" width="6" height="3" fill="#b2fa72"/></svg><div style="left:65.6px;top:149px;width:61.400000000000006px;height:11px;background:#fff"></div><div class="t" style="left:66.60px;top:149.11px;font-size:10.5px;color:#000;transform:scaleX(0.9785);transform-origin:0 0;margin-left:-0.51px;">EURGBP [M]</div><div style="left:132.6px;top:149px;width:29.5px;height:11px;background:#fff"></div><div class="t" style="left:133.60px;top:149.11px;font-size:10.5px;color:#000;transform:scaleX(1.1119);transform-origin:0 0;margin-left:-0.58px;">1 Min</div><div style="left:169.8px;top:149px;width:119.0px;height:11px;background:#fff"></div><div class="t" style="left:170.80px;top:149.11px;font-size:10.5px;color:#000;transform:scaleX(1.0526);transform-origin:0 0;margin-left:-0.55px;">#1 2018-10-18 18:02:48</div><div style="left:290px;top:147px;width:54px;height:13px;background:#000"><div class="t" style="left:2.00px;top:2.11px;font-size:10.5px;color:#fff;transform:scaleX(1.0131);transform-origin:0 0;margin-left:-0.53px;">B: 0.88010</div></div><div style="left:345px;top:147px;width:54px;height:13px;background:#000"><div class="t" style="left:2.00px;top:2.11px;font-size:10.5px;color:#fff;transform:scaleX(1.0131);transform-origin:0 0;margin-left:-0.53px;">A: 0.88030</div></div><div class="t" style="left:401.50px;top:149.11px;font-size:10.5px;color:#18c818;transform:scaleX(1.0660);transform-origin:0 0;margin-left:-0.56px;">AB Diff: 0.00020</div><div style="left:563px;top:206px;width:3px;height:1px;background:#000"></div><div class="t" style="left:568.00px;top:201.69px;font-size:11px;color:#000;transform:scaleX(0.9930);transform-origin:0 0;margin-left:-0.55px;">0.88000</div><div style="left:563px;top:232px;width:3px;height:1px;background:#000"></div><div class="t" style="left:568.00px;top:227.69px;font-size:11px;color:#000;transform:scaleX(0.9930);transform-origin:0 0;margin-left:-0.55px;">0.87980</div><div style="left:563px;top:258px;width:3px;height:1px;background:#000"></div><div class="t" style="left:568.00px;top:253.69px;font-size:11px;color:#000;transform:scaleX(0.9930);transform-origin:0 0;margin-left:-0.55px;">0.87960</div><div style="left:563px;top:284px;width:3px;height:1px;background:#000"></div><div class="t" style="left:568.00px;top:279.69px;font-size:11px;color:#000;transform:scaleX(0.9930);transform-origin:0 0;margin-left:-0.55px;">0.87940</div><div style="left:563px;top:310px;width:3px;height:1px;background:#000"></div><div class="t" style="left:568.00px;top:305.69px;font-size:11px;color:#000;transform:scaleX(0.9930);transform-origin:0 0;margin-left:-0.55px;">0.87920</div><div style="left:563px;top:336px;width:3px;height:1px;background:#000"></div><div class="t" style="left:568.00px;top:331.69px;font-size:11px;color:#000;transform:scaleX(0.9930);transform-origin:0 0;margin-left:-0.55px;">0.87900</div><div style="left:563px;top:180px;width:3px;height:1px;background:#000"></div><div style="left:566px;top:174px;width:41px;height:13px;background:#000"><div class="t" style="left:1.00px;top:1.69px;font-size:11px;color:#fff;transform:scaleX(1.0058);transform-origin:0 0;margin-left:-0.55px;">0.88020</div></div><div style="left:122px;top:343px;width:1px;height:3px;background:#000"></div><div class="t" style="left:109.50px;top:347.69px;font-size:11px;color:#000;transform:scaleX(0.9722);transform-origin:0 0;margin-left:-0.53px;">17:29</div><div style="left:161px;top:343px;width:1px;height:3px;background:#000"></div><div class="t" style="left:148.50px;top:347.69px;font-size:11px;color:#000;transform:scaleX(0.9722);transform-origin:0 0;margin-left:-0.53px;">17:32</div><div style="left:200px;top:343px;width:1px;height:3px;background:#000"></div><div class="t" style="left:187.50px;top:347.69px;font-size:11px;color:#000;transform:scaleX(0.9722);transform-origin:0 0;margin-left:-0.53px;">17:35</div><div style="left:239px;top:343px;width:1px;height:3px;background:#000"></div><div class="t" style="left:226.50px;top:347.69px;font-size:11px;color:#000;transform:scaleX(0.9722);transform-origin:0 0;margin-left:-0.53px;">17:38</div><div style="left:278px;top:343px;width:1px;height:3px;background:#000"></div><div class="t" style="left:265.50px;top:347.69px;font-size:11px;color:#000;transform:scaleX(0.9722);transform-origin:0 0;margin-left:-0.53px;">17:41</div><div style="left:317px;top:343px;width:1px;height:3px;background:#000"></div><div class="t" style="left:304.50px;top:347.69px;font-size:11px;color:#000;transform:scaleX(0.9722);transform-origin:0 0;margin-left:-0.53px;">17:44</div><div style="left:356px;top:343px;width:1px;height:3px;background:#000"></div><div class="t" style="left:343.50px;top:347.69px;font-size:11px;color:#000;transform:scaleX(0.9722);transform-origin:0 0;margin-left:-0.53px;">17:47</div><div style="left:395px;top:343px;width:1px;height:3px;background:#000"></div><div class="t" style="left:382.50px;top:347.69px;font-size:11px;color:#000;transform:scaleX(0.9722);transform-origin:0 0;margin-left:-0.53px;">17:50</div><div style="left:434px;top:343px;width:1px;height:3px;background:#000"></div><div class="t" style="left:421.50px;top:347.69px;font-size:11px;color:#000;transform:scaleX(0.9722);transform-origin:0 0;margin-left:-0.53px;">17:53</div><div style="left:473px;top:343px;width:1px;height:3px;background:#000"></div><div class="t" style="left:460.50px;top:347.69px;font-size:11px;color:#000;transform:scaleX(0.9722);transform-origin:0 0;margin-left:-0.53px;">17:56</div><div style="left:512px;top:343px;width:1px;height:3px;background:#000"></div><div class="t" style="left:499.50px;top:347.69px;font-size:11px;color:#000;transform:scaleX(0.9722);transform-origin:0 0;margin-left:-0.53px;">17:59</div><div style="left:551px;top:343px;width:1px;height:3px;background:#000"></div><div class="t" style="left:538.50px;top:347.69px;font-size:11px;color:#000;transform:scaleX(0.9722);transform-origin:0 0;margin-left:-0.53px;">18:02</div><div style="left:70px;top:343px;width:1px;height:3px;background:#000"></div><div style="left:61px;top:346px;width:38px;height:13px;background:#000;overflow:hidden"><div class="t" style="left:-17.80px;top:1.69px;font-size:11px;color:#fff;transform:scaleX(0.9768);transform-origin:0 0;margin-left:-0.54px;">2018-10-18</div></div><div style="left:592px;top:346px;width:19px;height:13px;background:#00c000"><div class="t" style="left:4.50px;top:1.69px;font-size:11px;color:#000;transform:scaleX(0.9337);transform-origin:0 0;margin-left:-0.51px;">12</div></div><div style="left:60px;top:361px;width:552px;height:17px;background:#f0f0f0"></div><svg style="left:65px;top:365px" width="7" height="8"><path d="M5.5 0.8L1.8 4L5.5 7.2" stroke="#606060" stroke-width="1.9" fill="none"/></svg><div style="left:578px;top:361px;width:17px;height:16px;background:#cdcdcd"></div><svg style="left:600px;top:365px" width="7" height="8"><path d="M1.5 0.8L5.2 4L1.5 7.2" stroke="#606060" stroke-width="1.9" fill="none"/></svg><div style="left:51px;top:399px;width:616px;height:272px;background:linear-gradient(#bdcbdc 0px,#c3d0e0 14px,#cedbe8 30px,#d6e2ef 40px,#d6e2ef 100%);border:1px solid #e2eaf3;border-left-color:#6a7684;border-radius:6px 6px 0 0;"></div><div style="left:52px;top:400px;width:614px;height:1px;background:rgba(255,255,255,0.35);border-radius:5px 5px 0 0"></div><div style="left:52px;top:401px;width:1px;height:269px;background:rgba(255,255,255,0.35)"></div><div style="left:60px;top:410px;width:15px;height:13px;background:#fbfbfb;border-top:2px solid #7c7c7c;border-right:1px solid #7c7c7c;border-bottom:1px solid #7c7c7c;border-left:1px solid #e8eef4;border-radius:1px"><div style="left:0.7px;top:1px;width:5.5px;height:7px;background:linear-gradient(#3a6ab8,#3a9a80 50%,#48b060)"></div><div style="left:11px;top:1px;width:1.2px;height:4px;background:linear-gradient(#2a58b0,#40a850)"></div><div style="left:7px;top:7px;width:3px;height:2px;background:#c4c4c4"></div></div><div class="t" style="left:80.40px;top:411.84px;font-size:12px;color:#9896a2;transform:scaleX(0.9311);transform-origin:0 0;margin-left:-0.56px;">GBPUSD [M]</div><div class="t" style="left:152.30px;top:411.84px;font-size:12px;color:#9896a2;transform:scaleX(1.0260);transform-origin:0 0;margin-left:-0.62px;">1 Min</div><div class="t" style="left:191.20px;top:411.84px;font-size:12px;color:#9896a2;transform:scaleX(1.0026);transform-origin:0 0;margin-left:-0.60px;">#3</div><div class="t" style="left:210.00px;top:411.84px;font-size:12px;color:#9896a2;transform:scaleX(0.9845);transform-origin:0 0;margin-left:-0.59px;">British Pound / US Dollar</div><div style="left:558px;top:408px;width:32px;height:18px;background:linear-gradient(#cad7e6 0%,#c6d3e2 50%,#c2d0e0 100%);border:1px solid #8898b2;border-radius:3px;"></div><div style="left:568px;top:416px;width:11px;height:5px;background:#f0f0f0;border:1px solid #4a5060;border-radius:2px"></div><div style="left:592px;top:408px;width:32px;height:18px;background:linear-gradient(#cad7e6 0%,#c6d3e2 50%,#c2d0e0 100%);border:1px solid #8898b2;border-radius:3px;"></div><div style="left:602px;top:412px;width:11px;height:9px;background:#f0f0f0;border:1px solid #4a5060;border-radius:2px"><div style="left:2px;top:2px;width:5px;height:3px;background:#8aa0c0;border:1px solid #4a5060"></div></div><div style="left:626px;top:408px;width:32px;height:18px;background:linear-gradient(#cad7e6 0%,#c6d3e2 50%,#c2d0e0 100%);border:1px solid #8898b2;border-radius:3px;"></div><svg style="left:636.0px;top:412px" width="12" height="10" viewBox="0 0 12 10"><path d="M2.6 1.8L9.4 8.2M9.4 1.8L2.6 8.2" stroke="#4a5060" stroke-width="3.8" stroke-linecap="round"/><path d="M2.6 1.8L9.4 8.2M9.4 1.8L2.6 8.2" stroke="#f0f0f0" stroke-width="2.0" stroke-linecap="round"/></svg><div style="left:58px;top:429px;width:601px;height:234px;background:#fff;border-left:1px solid #a0a0a0;border-top:1px solid #a0a0a0;border-right:1px solid #f4f4f4;border-bottom:1px solid #f4f4f4"></div><div style="left:59px;top:430px;width:599px;height:1px;background:#696969"></div><div style="left:59px;top:430px;width:1px;height:232px;background:#696969"></div><div style="left:60px;top:431px;width:1px;height:197px;background:#000"></div><div style="left:60px;top:627px;width:549px;height:1px;background:#000"></div><div style="left:608px;top:431px;width:1px;height:197px;background:#000"></div><svg style="left:61px;top:431px" width="547" height="196" shape-rendering="crispEdges"><rect x="9" y="93" width="1" height="12" fill="#000"/><rect x="22" y="98" width="1" height="17" fill="#000"/><rect x="35" y="108" width="1" height="14" fill="#000"/><rect x="48" y="68" width="1" height="41" fill="#000"/><rect x="61" y="17" width="1" height="55" fill="#000"/><rect x="74" y="60" width="1" height="17" fill="#000"/><rect x="87" y="55" width="1" height="16" fill="#000"/><rect x="100" y="57" width="1" height="30" fill="#000"/><rect x="113" y="58" width="1" height="30" fill="#000"/><rect x="126" y="60" width="1" height="24" fill="#000"/><rect x="139" y="53" width="1" height="15" fill="#000"/><rect x="152" y="63" width="1" height="11" fill="#000"/><rect x="165" y="51" width="1" height="17" fill="#000"/><rect x="178" y="51" width="1" height="28" fill="#000"/><rect x="191" y="57" width="1" height="21" fill="#000"/><rect x="204" y="58" width="1" height="12" fill="#000"/><rect x="217" y="57" width="1" height="26" fill="#000"/><rect x="230" y="81" width="1" height="15" fill="#000"/><rect x="243" y="81" width="1" height="11" fill="#000"/><rect x="256" y="90" width="1" height="12" fill="#000"/><rect x="269" y="94" width="1" height="30" fill="#000"/><rect x="282" y="110" width="1" height="16" fill="#000"/><rect x="295" y="123" width="1" height="33" fill="#000"/><rect x="308" y="130" width="1" height="33" fill="#000"/><rect x="321" y="131" width="1" height="18" fill="#000"/><rect x="334" y="128" width="1" height="12" fill="#000"/><rect x="347" y="131" width="1" height="20" fill="#000"/><rect x="360" y="147" width="1" height="20" fill="#000"/><rect x="373" y="138" width="1" height="22" fill="#000"/><rect x="386" y="141" width="1" height="18" fill="#000"/><rect x="399" y="149" width="1" height="12" fill="#000"/><rect x="412" y="151" width="1" height="11" fill="#000"/><rect x="425" y="149" width="1" height="17" fill="#000"/><rect x="438" y="156" width="1" height="8" fill="#000"/><rect x="451" y="164" width="1" height="11" fill="#000"/><rect x="464" y="152" width="1" height="15" fill="#000"/><rect x="477" y="152" width="1" height="12" fill="#000"/><rect x="490" y="164" width="1" height="18" fill="#000"/><rect x="503" y="176" width="1" height="16" fill="#000"/><rect x="516" y="175" width="1" height="15" fill="#000"/><rect x="529" y="168" width="1" height="9" fill="#000"/><rect x="4" y="92" width="6" height="3" fill="#b2fa72"/><rect x="9" y="97" width="6" height="3" fill="#b2fa72"/><rect x="17" y="98" width="6" height="3" fill="#b2fa72"/><rect x="22" y="110" width="6" height="3" fill="#b2fa72"/><rect x="30" y="110" width="6" height="3" fill="#b2fa72"/><rect x="35" y="107" width="6" height="3" fill="#b2fa72"/><rect x="43" y="107" width="6" height="3" fill="#b2fa72"/><rect x="48" y="67" width="6" height="3" fill="#b2fa72"/><rect x="56" y="67" width="6" height="3" fill="#b2fa72"/><rect x="61" y="62" width="6" height="3" fill="#b2fa72"/><rect x="69" y="61" width="6" height="3" fill="#b2fa72"/><rect x="74" y="66" width="6" height="3" fill="#b2fa72"/><rect x="82" y="65" width="6" height="3" fill="#b2fa72"/><rect x="87" y="61" width="6" height="3" fill="#b2fa72"/><rect x="95" y="60" width="6" height="3" fill="#b2fa72"/><rect x="100" y="79" width="6" height="3" fill="#b2fa72"/><rect x="108" y="79" width="6" height="3" fill="#b2fa72"/><rect x="113" y="64" width="6" height="3" fill="#b2fa72"/><rect x="121" y="64" width="6" height="3" fill="#b2fa72"/><rect x="126" y="62" width="6" height="3" fill="#b2fa72"/><rect x="134" y="61" width="6" height="3" fill="#b2fa72"/><rect x="139" y="62" width="6" height="3" fill="#b2fa72"/><rect x="147" y="62" width="6" height="3" fill="#b2fa72"/><rect x="152" y="67" width="6" height="3" fill="#b2fa72"/><rect x="160" y="66" width="6" height="3" fill="#b2fa72"/><rect x="165" y="53" width="6" height="3" fill="#b2fa72"/><rect x="173" y="53" width="6" height="3" fill="#b2fa72"/><rect x="178" y="68" width="6" height="3" fill="#b2fa72"/><rect x="186" y="68" width="6" height="3" fill="#b2fa72"/><rect x="191" y="67" width="6" height="3" fill="#b2fa72"/><rect x="199" y="66" width="6" height="3" fill="#b2fa72"/><rect x="204" y="68" width="6" height="3" fill="#b2fa72"/><rect x="212" y="67" width="6" height="3" fill="#b2fa72"/><rect x="217" y="79" width="6" height="3" fill="#b2fa72"/><rect x="225" y="79" width="6" height="3" fill="#b2fa72"/><rect x="230" y="85" width="6" height="3" fill="#b2fa72"/><rect x="238" y="85" width="6" height="3" fill="#b2fa72"/><rect x="243" y="92" width="6" height="3" fill="#b2fa72"/><rect x="251" y="92" width="6" height="3" fill="#b2fa72"/><rect x="256" y="93" width="6" height="3" fill="#b2fa72"/><rect x="264" y="93" width="6" height="3" fill="#b2fa72"/><rect x="269" y="115" width="6" height="3" fill="#b2fa72"/><rect x="277" y="115" width="6" height="3" fill="#b2fa72"/><rect x="282" y="123" width="6" height="3" fill="#b2fa72"/><rect x="290" y="123" width="6" height="3" fill="#b2fa72"/><rect x="295" y="140" width="6" height="3" fill="#b2fa72"/><rect x="303" y="140" width="6" height="3" fill="#b2fa72"/><rect x="308" y="134" width="6" height="3" fill="#b2fa72"/><rect x="316" y="134" width="6" height="3" fill="#b2fa72"/><rect x="321" y="130" width="6" height="3" fill="#b2fa72"/><rect x="329" y="130" width="6" height="3" fill="#b2fa72"/><rect x="334" y="132" width="6" height="3" fill="#b2fa72"/><rect x="342" y="133" width="6" height="3" fill="#b2fa72"/><rect x="347" y="146" width="6" height="3" fill="#b2fa72"/><rect x="355" y="146" width="6" height="3" fill="#b2fa72"/><rect x="360" y="159" width="6" height="3" fill="#b2fa72"/><rect x="368" y="159" width="6" height="3" fill="#b2fa72"/><rect x="373" y="140" width="6" height="3" fill="#b2fa72"/><rect x="381" y="140" width="6" height="3" fill="#b2fa72"/><rect x="386" y="157" width="6" height="3" fill="#b2fa72"/><rect x="394" y="157" width="6" height="3" fill="#b2fa72"/><rect x="399" y="160" width="6" height="3" fill="#b2fa72"/><rect x="407" y="160" width="6" height="3" fill="#b2fa72"/><rect x="412" y="150" width="6" height="3" fill="#b2fa72"/><rect x="420" y="150" width="6" height="3" fill="#b2fa72"/><rect x="425" y="162" width="6" height="3" fill="#b2fa72"/><rect x="433" y="162" width="6" height="3" fill="#b2fa72"/><rect x="438" y="162" width="6" height="3" fill="#b2fa72"/><rect x="446" y="163" width="6" height="3" fill="#b2fa72"/><rect x="451" y="164" width="6" height="3" fill="#b2fa72"/><rect x="459" y="163" width="6" height="3" fill="#b2fa72"/><rect x="464" y="155" width="6" height="3" fill="#b2fa72"/><rect x="472" y="155" width="6" height="3" fill="#b2fa72"/><rect x="477" y="163" width="6" height="3" fill="#b2fa72"/><rect x="485" y="163" width="6" height="3" fill="#b2fa72"/><rect x="490" y="175" width="6" height="3" fill="#b2fa72"/><rect x="498" y="175" width="6" height="3" fill="#b2fa72"/><rect x="503" y="183" width="6" height="3" fill="#b2fa72"/><rect x="511" y="183" width="6" height="3" fill="#b2fa72"/><rect x="516" y="175" width="6" height="3" fill="#b2fa72"/><rect x="524" y="176" width="6" height="3" fill="#b2fa72"/><rect x="529" y="170" width="6" height="3" fill="#b2fa72"/></svg><div style="left:65.6px;top:433px;width:62.10000000000001px;height:11px;background:#fff"></div><div class="t" style="left:66.60px;top:433.11px;font-size:10.5px;color:#000;transform:scaleX(0.9869);transform-origin:0 0;margin-left:-0.52px;">GBPUSD [M]</div><div style="left:134px;top:433px;width:28.900000000000006px;height:11px;background:#fff"></div><div class="t" style="left:135.00px;top:433.11px;font-size:10.5px;color:#000;transform:scaleX(1.0877);transform-origin:0 0;margin-left:-0.57px;">1 Min</div><div style="left:171px;top:433px;width:118.69999999999999px;height:11px;background:#fff"></div><div class="t" style="left:172.00px;top:433.11px;font-size:10.5px;color:#000;transform:scaleX(1.0499);transform-origin:0 0;margin-left:-0.55px;">#3 2018-10-18 18:02:48</div><div style="left:291px;top:431px;width:54px;height:13px;background:#000"><div class="t" style="left:2.00px;top:2.11px;font-size:10.5px;color:#fff;transform:scaleX(1.0131);transform-origin:0 0;margin-left:-0.53px;">B: 1.30600</div></div><div style="left:346px;top:431px;width:54px;height:13px;background:#000"><div class="t" style="left:2.00px;top:2.11px;font-size:10.5px;color:#fff;transform:scaleX(1.0131);transform-origin:0 0;margin-left:-0.53px;">A: 1.30615</div></div><div class="t" style="left:402.50px;top:433.11px;font-size:10.5px;color:#18c818;transform:scaleX(1.0633);transform-origin:0 0;margin-left:-0.56px;">AB Diff: 0.00015</div><div style="left:609px;top:462px;width:3px;height:1px;background:#000"></div><div class="t" style="left:612.90px;top:457.69px;font-size:11px;color:#000;transform:scaleX(0.9852);transform-origin:0 0;margin-left:-0.54px;">1.30840</div><div style="left:609px;top:486px;width:3px;height:1px;background:#000"></div><div class="t" style="left:612.90px;top:481.69px;font-size:11px;color:#000;transform:scaleX(0.9852);transform-origin:0 0;margin-left:-0.54px;">1.30800</div><div style="left:609px;top:510px;width:3px;height:1px;background:#000"></div><div class="t" style="left:612.90px;top:505.69px;font-size:11px;color:#000;transform:scaleX(0.9852);transform-origin:0 0;margin-left:-0.54px;">1.30760</div><div style="left:609px;top:534px;width:3px;height:1px;background:#000"></div><div class="t" style="left:612.90px;top:529.69px;font-size:11px;color:#000;transform:scaleX(0.9852);transform-origin:0 0;margin-left:-0.54px;">1.30720</div><div style="left:609px;top:558px;width:3px;height:1px;background:#000"></div><div class="t" style="left:612.90px;top:553.69px;font-size:11px;color:#000;transform:scaleX(0.9852);transform-origin:0 0;margin-left:-0.54px;">1.30680</div><div style="left:609px;top:582px;width:3px;height:1px;background:#000"></div><div class="t" style="left:612.90px;top:577.69px;font-size:11px;color:#000;transform:scaleX(0.9852);transform-origin:0 0;margin-left:-0.54px;">1.30640</div><div style="left:609px;top:606px;width:3px;height:1px;background:#000"></div><div class="t" style="left:612.90px;top:601.69px;font-size:11px;color:#000;transform:scaleX(0.9852);transform-origin:0 0;margin-left:-0.54px;">1.30600</div><div style="left:612px;top:596px;width:41px;height:13px;background:#000"><div class="t" style="left:1.00px;top:1.69px;font-size:11px;color:#fff;transform:scaleX(1.0058);transform-origin:0 0;margin-left:-0.55px;">1.30607</div></div><div style="left:122px;top:628px;width:1px;height:3px;background:#000"></div><div class="t" style="left:109.50px;top:632.69px;font-size:11px;color:#000;transform:scaleX(0.9722);transform-origin:0 0;margin-left:-0.53px;">17:26</div><div style="left:161px;top:628px;width:1px;height:3px;background:#000"></div><div class="t" style="left:148.50px;top:632.69px;font-size:11px;color:#000;transform:scaleX(0.9722);transform-origin:0 0;margin-left:-0.53px;">17:29</div><div style="left:200px;top:628px;width:1px;height:3px;background:#000"></div><div class="t" style="left:187.50px;top:632.69px;font-size:11px;color:#000;transform:scaleX(0.9722);transform-origin:0 0;margin-left:-0.53px;">17:32</div><div style="left:239px;top:628px;width:1px;height:3px;background:#000"></div><div class="t" style="left:226.50px;top:632.69px;font-size:11px;color:#000;transform:scaleX(0.9722);transform-origin:0 0;margin-left:-0.53px;">17:35</div><div style="left:278px;top:628px;width:1px;height:3px;background:#000"></div><div class="t" style="left:265.50px;top:632.69px;font-size:11px;color:#000;transform:scaleX(0.9722);transform-origin:0 0;margin-left:-0.53px;">17:38</div><div style="left:317px;top:628px;width:1px;height:3px;background:#000"></div><div class="t" style="left:304.50px;top:632.69px;font-size:11px;color:#000;transform:scaleX(0.9722);transform-origin:0 0;margin-left:-0.53px;">17:41</div><div style="left:356px;top:628px;width:1px;height:3px;background:#000"></div><div class="t" style="left:343.50px;top:632.69px;font-size:11px;color:#000;transform:scaleX(0.9722);transform-origin:0 0;margin-left:-0.53px;">17:44</div><div style="left:395px;top:628px;width:1px;height:3px;background:#000"></div><div class="t" style="left:382.50px;top:632.69px;font-size:11px;color:#000;transform:scaleX(0.9722);transform-origin:0 0;margin-left:-0.53px;">17:47</div><div style="left:434px;top:628px;width:1px;height:3px;background:#000"></div><div class="t" style="left:421.50px;top:632.69px;font-size:11px;color:#000;transform:scaleX(0.9722);transform-origin:0 0;margin-left:-0.53px;">17:50</div><div style="left:473px;top:628px;width:1px;height:3px;background:#000"></div><div class="t" style="left:460.50px;top:632.69px;font-size:11px;color:#000;transform:scaleX(0.9722);transform-origin:0 0;margin-left:-0.53px;">17:53</div><div style="left:512px;top:628px;width:1px;height:3px;background:#000"></div><div class="t" style="left:499.50px;top:632.69px;font-size:11px;color:#000;transform:scaleX(0.9722);transform-origin:0 0;margin-left:-0.53px;">17:56</div><div style="left:551px;top:628px;width:1px;height:3px;background:#000"></div><div class="t" style="left:538.50px;top:632.69px;font-size:11px;color:#000;transform:scaleX(0.9722);transform-origin:0 0;margin-left:-0.53px;">17:59</div><div style="left:590px;top:628px;width:1px;height:3px;background:#000"></div><div class="t" style="left:577.50px;top:632.69px;font-size:11px;color:#000;transform:scaleX(0.9722);transform-origin:0 0;margin-left:-0.53px;">18:02</div><div style="left:70px;top:628px;width:1px;height:3px;background:#000"></div><div style="left:61px;top:631px;width:38px;height:13px;background:#000;overflow:hidden"><div class="t" style="left:-17.80px;top:1.69px;font-size:11px;color:#fff;transform:scaleX(0.9768);transform-origin:0 0;margin-left:-0.54px;">2018-10-18</div></div><div style="left:638px;top:631px;width:19px;height:13px;background:#00c000"><div class="t" style="left:4.50px;top:1.69px;font-size:11px;color:#000;transform:scaleX(0.9337);transform-origin:0 0;margin-left:-0.51px;">12</div></div><div style="left:60px;top:646px;width:598px;height:16px;background:#f0f0f0"></div><svg style="left:65px;top:650px" width="7" height="8"><path d="M5.5 0.8L1.8 4L5.5 7.2" stroke="#606060" stroke-width="1.9" fill="none"/></svg><div style="left:624px;top:646px;width:17px;height:15px;background:#cdcdcd"></div><svg style="left:646px;top:650px" width="7" height="8"><path d="M1.5 0.8L5.2 4L1.5 7.2" stroke="#606060" stroke-width="1.9" fill="none"/></svg><div style="left:674px;top:124px;width:574px;height:309px;background:#1a1a1a"></div><div style="left:674px;top:118px;width:573px;height:314px;background:linear-gradient(#9cb6d6 0px,#a8c2e0 14px,#b4cce8 30px,#b9d1ea 40px,#b9d1ea 100%);border:1px solid #3a4a5e;border-top-color:#dbe6f2;border-right:1px solid #2a9ad0;border-bottom:1px solid #2a9ad0;border-radius:6px 6px 0 0;"></div><div style="left:675px;top:119px;width:571px;height:1px;background:rgba(255,255,255,0.35);border-radius:5px 5px 0 0"></div><div style="left:675px;top:120px;width:1px;height:311px;background:rgba(255,255,255,0.35)"></div><div style="left:684px;top:129px;width:15px;height:13px;background:#fbfbfb;border-top:2px solid #7c7c7c;border-right:1px solid #7c7c7c;border-bottom:1px solid #7c7c7c;border-left:1px solid #e8eef4;border-radius:1px"><div style="left:0.7px;top:1px;width:5.5px;height:7px;background:linear-gradient(#3a6ab8,#3a9a80 50%,#48b060)"></div><div style="left:11px;top:1px;width:1.2px;height:4px;background:linear-gradient(#2a58b0,#40a850)"></div><div style="left:7px;top:7px;width:3px;height:2px;background:#c4c4c4"></div></div><div class="t" style="left:704.20px;top:130.84px;font-size:12px;color:#000;transform:scaleX(0.9642);transform-origin:0 0;margin-left:-0.58px;">AUDUSD [M]</div><div class="t" style="left:778.70px;top:130.84px;font-size:12px;color:#000;transform:scaleX(1.0225);transform-origin:0 0;margin-left:-0.61px;">1 Min</div><div class="t" style="left:816.90px;top:130.84px;font-size:12px;color:#000;transform:scaleX(1.0760);transform-origin:0 0;margin-left:-0.65px;">#2</div><div class="t" style="left:836.60px;top:130.84px;font-size:12px;color:#000;transform:scaleX(0.9804);transform-origin:0 0;margin-left:-0.59px;">Australian Dollar / US Dollar</div><div style="left:1138px;top:127px;width:32px;height:18px;background:linear-gradient(#d2e2f4 0%,#c4d7ee 45%,#9cb6d2 52%,#a8c0dc 75%,#bcd2ec 100%);border:1px solid #56667e;border-radius:3px;"></div><div style="left:1148px;top:135px;width:11px;height:5px;background:#f4f4f4;border:1px solid #3a4050;border-radius:2px"></div><div style="left:1172px;top:127px;width:32px;height:18px;background:linear-gradient(#d2e2f4 0%,#c4d7ee 45%,#9cb6d2 52%,#a8c0dc 75%,#bcd2ec 100%);border:1px solid #56667e;border-radius:3px;"></div><div style="left:1182px;top:131px;width:11px;height:9px;background:#f4f4f4;border:1px solid #3a4050;border-radius:2px"><div style="left:2px;top:2px;width:5px;height:3px;background:#8aa0c0;border:1px solid #3a4050"></div></div><div style="left:1206px;top:127px;width:32px;height:18px;background:linear-gradient(#eab0a0 0%,#dc8a78 45%,#c03a22 52%,#c85038 75%,#dc8a78 100%);border:1px solid #5a1a20;border-radius:3px;"></div><svg style="left:1216.0px;top:131px" width="12" height="10" viewBox="0 0 12 10"><path d="M2.6 1.8L9.4 8.2M9.4 1.8L2.6 8.2" stroke="#3a3a4a" stroke-width="3.8" stroke-linecap="round"/><path d="M2.6 1.8L9.4 8.2M9.4 1.8L2.6 8.2" stroke="#f8f8f8" stroke-width="2.0" stroke-linecap="round"/></svg><div style="left:682px;top:148px;width:558px;height:276px;background:#fff;border-left:1px solid #a0a0a0;border-top:1px solid #a0a0a0;border-right:1px solid #f4f4f4;border-bottom:1px solid #f4f4f4"></div><div style="left:683px;top:149px;width:556px;height:1px;background:#696969"></div><div style="left:683px;top:149px;width:1px;height:274px;background:#696969"></div><div style="left:684px;top:150px;width:1px;height:239px;background:#000"></div><div style="left:684px;top:388px;width:505px;height:1px;background:#000"></div><div style="left:1188px;top:150px;width:1px;height:239px;background:#000"></div><svg style="left:685px;top:150px" width="503" height="238" shape-rendering="crispEdges"><rect x="9" y="55" width="1" height="35" fill="#000"/><rect x="22" y="17" width="1" height="38" fill="#000"/><rect x="35" y="48" width="1" height="18" fill="#000"/><rect x="48" y="46" width="1" height="13" fill="#000"/><rect x="61" y="54" width="1" height="25" fill="#000"/><rect x="74" y="53" width="1" height="20" fill="#000"/><rect x="87" y="57" width="1" height="32" fill="#000"/><rect x="100" y="58" width="1" height="24" fill="#000"/><rect x="113" y="73" width="1" height="16" fill="#000"/><rect x="126" y="56" width="1" height="22" fill="#000"/><rect x="139" y="51" width="1" height="29" fill="#000"/><rect x="152" y="66" width="1" height="13" fill="#000"/><rect x="165" y="57" width="1" height="17" fill="#000"/><rect x="178" y="60" width="1" height="23" fill="#000"/><rect x="191" y="79" width="1" height="22" fill="#000"/><rect x="204" y="79" width="1" height="18" fill="#000"/><rect x="217" y="93" width="1" height="27" fill="#000"/><rect x="230" y="110" width="1" height="20" fill="#000"/><rect x="243" y="116" width="1" height="19" fill="#000"/><rect x="256" y="130" width="1" height="29" fill="#000"/><rect x="269" y="150" width="1" height="11" fill="#000"/><rect x="282" y="160" width="1" height="10" fill="#000"/><rect x="295" y="160" width="1" height="13" fill="#000"/><rect x="308" y="156" width="1" height="24" fill="#000"/><rect x="321" y="170" width="1" height="26" fill="#000"/><rect x="334" y="167" width="1" height="18" fill="#000"/><rect x="347" y="170" width="1" height="31" fill="#000"/><rect x="360" y="190" width="1" height="11" fill="#000"/><rect x="373" y="180" width="1" height="19" fill="#000"/><rect x="386" y="190" width="1" height="21" fill="#000"/><rect x="399" y="199" width="1" height="8" fill="#000"/><rect x="412" y="196" width="1" height="11" fill="#000"/><rect x="425" y="196" width="1" height="10" fill="#000"/><rect x="438" y="204" width="1" height="18" fill="#000"/><rect x="451" y="211" width="1" height="23" fill="#000"/><rect x="464" y="205" width="1" height="21" fill="#000"/><rect x="477" y="198" width="1" height="26" fill="#000"/><rect x="490" y="194" width="1" height="17" fill="#000"/><rect x="4" y="87" width="6" height="3" fill="#b2fa72"/><rect x="9" y="54" width="6" height="3" fill="#b2fa72"/><rect x="17" y="54" width="6" height="3" fill="#b2fa72"/><rect x="22" y="49" width="6" height="3" fill="#b2fa72"/><rect x="30" y="50" width="6" height="3" fill="#b2fa72"/><rect x="35" y="55" width="6" height="3" fill="#b2fa72"/><rect x="43" y="56" width="6" height="3" fill="#b2fa72"/><rect x="48" y="55" width="6" height="3" fill="#b2fa72"/><rect x="56" y="55" width="6" height="3" fill="#b2fa72"/><rect x="61" y="66" width="6" height="3" fill="#b2fa72"/><rect x="69" y="65" width="6" height="3" fill="#b2fa72"/><rect x="74" y="61" width="6" height="3" fill="#b2fa72"/><rect x="82" y="61" width="6" height="3" fill="#b2fa72"/><rect x="87" y="58" width="6" height="3" fill="#b2fa72"/><rect x="95" y="58" width="6" height="3" fill="#b2fa72"/><rect x="100" y="76" width="6" height="3" fill="#b2fa72"/><rect x="108" y="77" width="6" height="3" fill="#b2fa72"/><rect x="113" y="76" width="6" height="3" fill="#b2fa72"/><rect x="121" y="76" width="6" height="3" fill="#b2fa72"/><rect x="126" y="60" width="6" height="3" fill="#b2fa72"/><rect x="134" y="60" width="6" height="3" fill="#b2fa72"/><rect x="139" y="73" width="6" height="3" fill="#b2fa72"/><rect x="147" y="72" width="6" height="3" fill="#b2fa72"/><rect x="152" y="71" width="6" height="3" fill="#b2fa72"/><rect x="160" y="71" width="6" height="3" fill="#b2fa72"/><rect x="165" y="71" width="6" height="3" fill="#b2fa72"/><rect x="173" y="70" width="6" height="3" fill="#b2fa72"/><rect x="178" y="80" width="6" height="3" fill="#b2fa72"/><rect x="186" y="80" width="6" height="3" fill="#b2fa72"/><rect x="191" y="92" width="6" height="3" fill="#b2fa72"/><rect x="199" y="92" width="6" height="3" fill="#b2fa72"/><rect x="204" y="93" width="6" height="3" fill="#b2fa72"/><rect x="212" y="92" width="6" height="3" fill="#b2fa72"/><rect x="217" y="116" width="6" height="3" fill="#b2fa72"/><rect x="225" y="115" width="6" height="3" fill="#b2fa72"/><rect x="230" y="120" width="6" height="3" fill="#b2fa72"/><rect x="238" y="120" width="6" height="3" fill="#b2fa72"/><rect x="243" y="128" width="6" height="3" fill="#b2fa72"/><rect x="251" y="129" width="6" height="3" fill="#b2fa72"/><rect x="256" y="149" width="6" height="3" fill="#b2fa72"/><rect x="264" y="149" width="6" height="3" fill="#b2fa72"/><rect x="269" y="158" width="6" height="3" fill="#b2fa72"/><rect x="277" y="159" width="6" height="3" fill="#b2fa72"/><rect x="282" y="161" width="6" height="3" fill="#b2fa72"/><rect x="290" y="161" width="6" height="3" fill="#b2fa72"/><rect x="295" y="165" width="6" height="3" fill="#b2fa72"/><rect x="303" y="165" width="6" height="3" fill="#b2fa72"/><rect x="308" y="173" width="6" height="3" fill="#b2fa72"/><rect x="316" y="173" width="6" height="3" fill="#b2fa72"/><rect x="321" y="180" width="6" height="3" fill="#b2fa72"/><rect x="329" y="180" width="6" height="3" fill="#b2fa72"/><rect x="334" y="169" width="6" height="3" fill="#b2fa72"/><rect x="342" y="170" width="6" height="3" fill="#b2fa72"/><rect x="347" y="198" width="6" height="3" fill="#b2fa72"/><rect x="355" y="198" width="6" height="3" fill="#b2fa72"/><rect x="360" y="191" width="6" height="3" fill="#b2fa72"/><rect x="368" y="191" width="6" height="3" fill="#b2fa72"/><rect x="373" y="190" width="6" height="3" fill="#b2fa72"/><rect x="381" y="191" width="6" height="3" fill="#b2fa72"/><rect x="386" y="207" width="6" height="3" fill="#b2fa72"/><rect x="394" y="206" width="6" height="3" fill="#b2fa72"/><rect x="399" y="202" width="6" height="3" fill="#b2fa72"/><rect x="407" y="201" width="6" height="3" fill="#b2fa72"/><rect x="412" y="199" width="6" height="3" fill="#b2fa72"/><rect x="420" y="199" width="6" height="3" fill="#b2fa72"/><rect x="425" y="205" width="6" height="3" fill="#b2fa72"/><rect x="433" y="205" width="6" height="3" fill="#b2fa72"/><rect x="438" y="210" width="6" height="3" fill="#b2fa72"/><rect x="446" y="210" width="6" height="3" fill="#b2fa72"/><rect x="451" y="218" width="6" height="3" fill="#b2fa72"/><rect x="459" y="219" width="6" height="3" fill="#b2fa72"/><rect x="464" y="211" width="6" height="3" fill="#b2fa72"/><rect x="472" y="211" width="6" height="3" fill="#b2fa72"/><rect x="477" y="199" width="6" height="3" fill="#b2fa72"/><rect x="485" y="199" width="6" height="3" fill="#b2fa72"/><rect x="490" y="208" width="6" height="3" fill="#b2fa72"/></svg><div style="left:689.2px;top:152px;width:64.89999999999998px;height:11px;background:#fff"></div><div class="t" style="left:690.20px;top:152.11px;font-size:10.5px;color:#000;transform:scaleX(1.0330);transform-origin:0 0;margin-left:-0.54px;">AUDUSD [M]</div><div style="left:759.6px;top:152px;width:30.100000000000023px;height:11px;background:#fff"></div><div class="t" style="left:760.60px;top:152.11px;font-size:10.5px;color:#000;transform:scaleX(1.1362);transform-origin:0 0;margin-left:-0.60px;">1 Min</div><div style="left:797px;top:152px;width:118.60000000000002px;height:11px;background:#fff"></div><div class="t" style="left:798.00px;top:152.11px;font-size:10.5px;color:#000;transform:scaleX(1.0490);transform-origin:0 0;margin-left:-0.55px;">#2 2018-10-18 18:02:49</div><div style="left:917px;top:150px;width:54px;height:13px;background:#000"><div class="t" style="left:2.00px;top:2.11px;font-size:10.5px;color:#fff;transform:scaleX(1.0292);transform-origin:0 0;margin-left:-0.54px;">B: 0.71175</div></div><div style="left:972px;top:150px;width:54px;height:13px;background:#000"><div class="t" style="left:2.00px;top:2.11px;font-size:10.5px;color:#fff;transform:scaleX(1.0292);transform-origin:0 0;margin-left:-0.54px;">A: 0.71192</div></div><div class="t" style="left:1028.00px;top:152.11px;font-size:10.5px;color:#18c818;transform:scaleX(1.0686);transform-origin:0 0;margin-left:-0.56px;">AB Diff: 0.00017</div><div style="left:1189px;top:182px;width:3px;height:1px;background:#000"></div><div class="t" style="left:1194.00px;top:177.69px;font-size:11px;color:#000;transform:scaleX(0.9930);transform-origin:0 0;margin-left:-0.55px;">0.71360</div><div style="left:1189px;top:222px;width:3px;height:1px;background:#000"></div><div class="t" style="left:1194.00px;top:217.69px;font-size:11px;color:#000;transform:scaleX(0.9930);transform-origin:0 0;margin-left:-0.55px;">0.71320</div><div style="left:1189px;top:262px;width:3px;height:1px;background:#000"></div><div class="t" style="left:1194.00px;top:257.69px;font-size:11px;color:#000;transform:scaleX(0.9930);transform-origin:0 0;margin-left:-0.55px;">0.71280</div><div style="left:1189px;top:302px;width:3px;height:1px;background:#000"></div><div class="t" style="left:1194.00px;top:297.69px;font-size:11px;color:#000;transform:scaleX(0.9930);transform-origin:0 0;margin-left:-0.55px;">0.71240</div><div style="left:1189px;top:343px;width:3px;height:1px;background:#000"></div><div class="t" style="left:1194.00px;top:338.69px;font-size:11px;color:#000;transform:scaleX(0.9930);transform-origin:0 0;margin-left:-0.55px;">0.71200</div><div style="left:1189px;top:383px;width:3px;height:1px;background:#000"></div><div class="t" style="left:1194.00px;top:378.69px;font-size:11px;color:#000;transform:scaleX(1.0143);transform-origin:0 0;margin-left:-0.56px;">0.71160</div><div style="left:1192px;top:354px;width:41px;height:13px;background:#000"><div class="t" style="left:1.00px;top:1.69px;font-size:11px;color:#fff;transform:scaleX(1.0275);transform-origin:0 0;margin-left:-0.57px;">0.71184</div></div><div style="left:746px;top:389px;width:1px;height:3px;background:#000"></div><div class="t" style="left:733.50px;top:393.69px;font-size:11px;color:#000;transform:scaleX(0.9722);transform-origin:0 0;margin-left:-0.53px;">17:29</div><div style="left:785px;top:389px;width:1px;height:3px;background:#000"></div><div class="t" style="left:772.50px;top:393.69px;font-size:11px;color:#000;transform:scaleX(0.9722);transform-origin:0 0;margin-left:-0.53px;">17:32</div><div style="left:824px;top:389px;width:1px;height:3px;background:#000"></div><div class="t" style="left:811.50px;top:393.69px;font-size:11px;color:#000;transform:scaleX(0.9722);transform-origin:0 0;margin-left:-0.53px;">17:35</div><div style="left:863px;top:389px;width:1px;height:3px;background:#000"></div><div class="t" style="left:850.50px;top:393.69px;font-size:11px;color:#000;transform:scaleX(0.9722);transform-origin:0 0;margin-left:-0.53px;">17:38</div><div style="left:902px;top:389px;width:1px;height:3px;background:#000"></div><div class="t" style="left:889.50px;top:393.69px;font-size:11px;color:#000;transform:scaleX(0.9722);transform-origin:0 0;margin-left:-0.53px;">17:41</div><div style="left:941px;top:389px;width:1px;height:3px;background:#000"></div><div class="t" style="left:928.50px;top:393.69px;font-size:11px;color:#000;transform:scaleX(0.9722);transform-origin:0 0;margin-left:-0.53px;">17:44</div><div style="left:980px;top:389px;width:1px;height:3px;background:#000"></div><div class="t" style="left:967.50px;top:393.69px;font-size:11px;color:#000;transform:scaleX(0.9722);transform-origin:0 0;margin-left:-0.53px;">17:47</div><div style="left:1019px;top:389px;width:1px;height:3px;background:#000"></div><div class="t" style="left:1006.50px;top:393.69px;font-size:11px;color:#000;transform:scaleX(0.9722);transform-origin:0 0;margin-left:-0.53px;">17:50</div><div style="left:1058px;top:389px;width:1px;height:3px;background:#000"></div><div class="t" style="left:1045.50px;top:393.69px;font-size:11px;color:#000;transform:scaleX(0.9722);transform-origin:0 0;margin-left:-0.53px;">17:53</div><div style="left:1097px;top:389px;width:1px;height:3px;background:#000"></div><div class="t" style="left:1084.50px;top:393.69px;font-size:11px;color:#000;transform:scaleX(0.9722);transform-origin:0 0;margin-left:-0.53px;">17:56</div><div style="left:1136px;top:389px;width:1px;height:3px;background:#000"></div><div class="t" style="left:1123.50px;top:393.69px;font-size:11px;color:#000;transform:scaleX(0.9722);transform-origin:0 0;margin-left:-0.53px;">17:59</div><div style="left:1175px;top:389px;width:1px;height:3px;background:#000"></div><div class="t" style="left:1162.50px;top:393.69px;font-size:11px;color:#000;transform:scaleX(0.9722);transform-origin:0 0;margin-left:-0.53px;">18:02</div><div style="left:694px;top:389px;width:1px;height:3px;background:#000"></div><div style="left:685px;top:392px;width:37px;height:13px;background:#000;overflow:hidden"><div class="t" style="left:-17.80px;top:1.69px;font-size:11px;color:#fff;transform:scaleX(0.9768);transform-origin:0 0;margin-left:-0.54px;">2018-10-18</div></div><div style="left:1218px;top:392px;width:19px;height:13px;background:#00c000"><div class="t" style="left:4.50px;top:1.69px;font-size:11px;color:#000;transform:scaleX(0.9337);transform-origin:0 0;margin-left:-0.51px;">12</div></div><div style="left:684px;top:407px;width:555px;height:16px;background:#f0f0f0"></div><svg style="left:689px;top:411px" width="7" height="8"><path d="M5.5 0.8L1.8 4L5.5 7.2" stroke="#606060" stroke-width="1.9" fill="none"/></svg><div style="left:1203px;top:407px;width:17px;height:15px;background:#cdcdcd"></div><svg style="left:1227px;top:411px" width="7" height="8"><path d="M1.5 0.8L5.2 4L1.5 7.2" stroke="#606060" stroke-width="1.9" fill="none"/></svg><div style="left:702px;top:443px;width:494px;height:277px;background:rgba(0,0,0,0.22);filter:blur(4px)"></div><div style="left:706px;top:445px;width:484px;height:268px;background:#fff"></div><div style="left:706px;top:493px;width:484px;height:1px;background:#e8e8e8"></div><div style="left:714px;top:452px;width:15px;height:13px;background:#fafafa;border:1px solid #b4b8c0;box-shadow:0 1px 1px rgba(0,0,0,0.15)"><div style="left:1px;top:2px;width:5px;height:8px;background:linear-gradient(160deg,#5a80c0,#3a9a78 60%,#50b060)"></div><div style="left:8px;top:2px;width:2px;height:8px;background:#dcdcdc"></div><div style="left:11px;top:2px;width:2px;height:5px;background:linear-gradient(#7aa0d8,#a0e0a0)"></div></div><div class="t" style="left:735.40px;top:454.04px;font-size:12px;color:#9c9cac;transform:scaleX(0.9839);transform-origin:0 0;margin-left:-0.59px;">QuoteBoard | forex-special.SymbolList</div><div style="left:1071px;top:459px;width:11px;height:1px;background:#707070"></div><div style="left:1116px;top:454px;width:10px;height:10px;border:1px solid #707070"></div><svg style="left:1161px;top:454px" width="11" height="11"><path d="M0.5 0.5L10.5 10.5M10.5 0.5L0.5 10.5" stroke="#707070" stroke-width="1"/></svg><div class="t" style="left:713.20px;top:478.84px;font-size:12px;color:#505058;transform:scaleX(0.9640);transform-origin:0 0;margin-left:-0.58px;">File</div><div class="t" style="left:745.20px;top:478.84px;font-size:12px;color:#505058;transform:scaleX(0.9839);transform-origin:0 0;margin-left:-0.59px;">Settings</div><div class="t" style="left:801.20px;top:478.84px;font-size:12px;color:#505058;transform:scaleX(1.0002);transform-origin:0 0;margin-left:-0.60px;">Alerts</div><div class="t" style="left:845.00px;top:478.84px;font-size:12px;color:#505058;transform:scaleX(0.9970);transform-origin:0 0;margin-left:-0.60px;">Symbols</div><div style="left:706px;top:495px;width:2px;height:217px;background:#a0a0a0"></div><div style="left:706px;top:711px;width:484px;height:2px;background:#f4f4f4"></div><div style="left:706px;top:495px;width:483px;height:2px;background:#a0a0a0"></div><div style="left:708px;top:497px;width:481px;height:25px;background:#f0f0f0"></div><div style="left:765px;top:497px;width:1px;height:25px;background:#c4c4c4"></div><div style="left:766px;top:497px;width:1px;height:25px;background:#fff"></div><div style="left:846px;top:497px;width:1px;height:25px;background:#c4c4c4"></div><div style="left:847px;top:497px;width:1px;height:25px;background:#fff"></div><div style="left:899px;top:497px;width:1px;height:25px;background:#c4c4c4"></div><div style="left:900px;top:497px;width:1px;height:25px;background:#fff"></div><div style="left:957px;top:497px;width:1px;height:25px;background:#c4c4c4"></div><div style="left:958px;top:497px;width:1px;height:25px;background:#fff"></div><div style="left:1121px;top:497px;width:1px;height:25px;background:#c4c4c4"></div><div style="left:1122px;top:497px;width:1px;height:25px;background:#fff"></div><div class="t" style="left:713.50px;top:504.84px;font-size:12px;color:#000;transform:scaleX(0.9323);transform-origin:0 0;margin-left:-0.56px;">Symbol</div><div class="t" style="left:770.60px;top:504.84px;font-size:12px;color:#000;transform:scaleX(0.9471);transform-origin:0 0;margin-left:-0.57px;">BidAskSpread</div><div class="t" style="left:851.30px;top:504.84px;font-size:12px;color:#000;transform:scaleX(0.9837);transform-origin:0 0;margin-left:-0.59px;">Bid</div><div class="t" style="left:904.20px;top:504.84px;font-size:12px;color:#000;transform:scaleX(0.9934);transform-origin:0 0;margin-left:-0.60px;">Ask</div><div class="t" style="left:962.00px;top:504.84px;font-size:12px;color:#000;transform:scaleX(1.0346);transform-origin:0 0;margin-left:-0.62px;">Name</div><svg style="left:749px;top:505px" width="11" height="10"><path d="M0.5 10L5.5 0.5L10.5 10Z" fill="#000"/></svg><div style="left:708px;top:522px;width:481px;height:1px;background:#c8c8c8"></div><div style="left:708px;top:541px;width:481px;height:1px;background:#c8c8c8"></div><div style="left:708px;top:560px;width:481px;height:1px;background:#c8c8c8"></div><div style="left:708px;top:579px;width:481px;height:1px;background:#c8c8c8"></div><div style="left:708px;top:598px;width:481px;height:1px;background:#c8c8c8"></div><div style="left:708px;top:617px;width:481px;height:1px;background:#c8c8c8"></div><div style="left:708px;top:636px;width:481px;height:1px;background:#c8c8c8"></div><div style="left:708px;top:655px;width:481px;height:1px;background:#c8c8c8"></div><div style="left:708px;top:674px;width:481px;height:1px;background:#c8c8c8"></div><div style="left:708px;top:693px;width:481px;height:1px;background:#c8c8c8"></div><div style="left:708px;top:712px;width:481px;height:1px;background:#c8c8c8"></div><div style="left:765px;top:522px;width:1px;height:189px;background:#c8c8c8"></div><div style="left:846px;top:522px;width:1px;height:189px;background:#c8c8c8"></div><div style="left:899px;top:522px;width:1px;height:189px;background:#c8c8c8"></div><div style="left:957px;top:522px;width:1px;height:189px;background:#c8c8c8"></div><div class="t" style="left:711.50px;top:525.84px;font-size:12px;color:#000;transform:scaleX(0.8953);transform-origin:0 0;margin-left:-0.54px;">AUDUSD</div><div class="t" style="left:798.40px;top:525.84px;font-size:12px;color:#000;transform:scaleX(0.9358);transform-origin:0 0;margin-left:-0.56px;">3.6</div><div class="t" style="left:853.10px;top:525.84px;font-size:12px;color:#000;transform:scaleX(0.9322);transform-origin:0 0;margin-left:-0.56px;">0.71175</div><div class="t" style="left:908.30px;top:525.84px;font-size:12px;color:#000;transform:scaleX(0.9298);transform-origin:0 0;margin-left:-0.56px;">0.71193</div><div class="t" style="left:960.30px;top:525.84px;font-size:12px;color:#000;transform:scaleX(0.9838);transform-origin:0 0;margin-left:-0.59px;">Australian Dollar / US Dollar</div><div class="t" style="left:711.50px;top:544.84px;font-size:12px;color:#000;transform:scaleX(0.8387);transform-origin:0 0;margin-left:-0.50px;">EURGBP</div><div class="t" style="left:798.40px;top:544.84px;font-size:12px;color:#000;transform:scaleX(0.9358);transform-origin:0 0;margin-left:-0.56px;">4.0</div><div class="t" style="left:853.10px;top:544.84px;font-size:12px;color:#000;transform:scaleX(0.9126);transform-origin:0 0;margin-left:-0.55px;">0.88010</div><div class="t" style="left:908.30px;top:544.84px;font-size:12px;color:#000;transform:scaleX(0.9102);transform-origin:0 0;margin-left:-0.55px;">0.88030</div><div class="t" style="left:960.30px;top:544.84px;font-size:12px;color:#000;transform:scaleX(0.9948);transform-origin:0 0;margin-left:-0.60px;">Euro / British Pound</div><div class="t" style="left:711.50px;top:563.84px;font-size:12px;color:#000;transform:scaleX(0.8649);transform-origin:0 0;margin-left:-0.52px;">GBPUSD</div><div class="t" style="left:798.40px;top:563.84px;font-size:12px;color:#000;transform:scaleX(0.9358);transform-origin:0 0;margin-left:-0.56px;">3.0</div><div class="t" style="left:853.10px;top:563.84px;font-size:12px;color:#000;transform:scaleX(0.9126);transform-origin:0 0;margin-left:-0.55px;">1.30600</div><div class="t" style="left:908.30px;top:563.84px;font-size:12px;color:#000;transform:scaleX(0.9102);transform-origin:0 0;margin-left:-0.55px;">1.30615</div><div class="t" style="left:960.30px;top:563.84px;font-size:12px;color:#000;transform:scaleX(0.9867);transform-origin:0 0;margin-left:-0.59px;">British Pound / US Dollar</div><div style="left:708px;top:523px;width:57px;height:18px;border:1px solid #6a6a6a"></div><div style="left:50px;top:747px;width:1237px;height:2px;background:#000"></div><div style="left:50px;top:749px;width:1237px;height:29px;background:#f0f0f0"></div><div style="left:50px;top:749px;width:1237px;height:2px;background:#fff"></div><div style="left:50px;top:751px;width:1237px;height:2px;background:#a0a0a0"></div><div style="left:1286px;top:113px;width:2px;height:665px;background:#fff"></div><div style="left:53px;top:753px;width:113px;height:21px;background:#f0f0f0;border-right:1px solid #808080;border-bottom:2px solid #a0a0a0;border-left:1px solid #fff"></div><div class="t" style="left:58.60px;top:758.84px;font-size:12px;color:#000;transform:scaleX(0.8347);transform-origin:0 0;margin-left:-0.50px;">EURGBP</div><div class="t" style="left:110.80px;top:758.84px;font-size:12px;color:#000;transform:scaleX(1.0189);transform-origin:0 0;margin-left:-0.61px;">1 Min</div><div class="t" style="left:148.90px;top:758.84px;font-size:12px;color:#000;transform:scaleX(0.9944);transform-origin:0 0;margin-left:-0.60px;">#1</div><div style="left:167px;top:752px;width:121px;height:24px;background:#f0f0f0;border:3px solid #0000ff;"></div><div class="t" style="left:173.90px;top:758.84px;font-size:12px;color:#000;transform:scaleX(0.9195);transform-origin:0 0;margin-left:-0.55px;">AUDUSD</div><div class="t" style="left:229.50px;top:758.84px;font-size:12px;color:#000;transform:scaleX(1.0260);transform-origin:0 0;margin-left:-0.62px;">1 Min</div><div class="t" style="left:268.10px;top:758.84px;font-size:12px;color:#000;transform:scaleX(1.0271);transform-origin:0 0;margin-left:-0.62px;">#2</div><div style="left:288px;top:753px;width:116px;height:21px;background:#f0f0f0;border-right:1px solid #808080;border-bottom:2px solid #a0a0a0;border-left:1px solid #fff"></div><div class="t" style="left:293.20px;top:758.84px;font-size:12px;color:#000;transform:scaleX(0.8750);transform-origin:0 0;margin-left:-0.53px;">GBPUSD</div><div class="t" style="left:346.30px;top:758.84px;font-size:12px;color:#000;transform:scaleX(1.0260);transform-origin:0 0;margin-left:-0.62px;">1 Min</div><div class="t" style="left:384.90px;top:758.84px;font-size:12px;color:#000;transform:scaleX(1.0515);transform-origin:0 0;margin-left:-0.63px;">#3</div><div style="left:8px;top:776px;width:1280px;height:2px;background:#fafafa"></div><div style="left:0px;top:778px;width:1296px;height:8px;background:#1b1b1b"></div><div style="left:230px;top:778px;width:36px;height:8px;background:#3a3a3a"></div><div style="left:1247px;top:785px;width:16px;height:1px;background:#fff"></div><div style="left:1283px;top:778px;width:1px;height:8px;background:#777"></div><div style="left:0px;top:773px;width:109px;height:13px;background:#fff"><div class="t" style="left:1.00px;top:0.84px;font-size:12px;color:#000;transform:scaleX(0.9612);transform-origin:0 0;margin-left:-0.58px;">www.sierrachart.com</div></div></body></html>
